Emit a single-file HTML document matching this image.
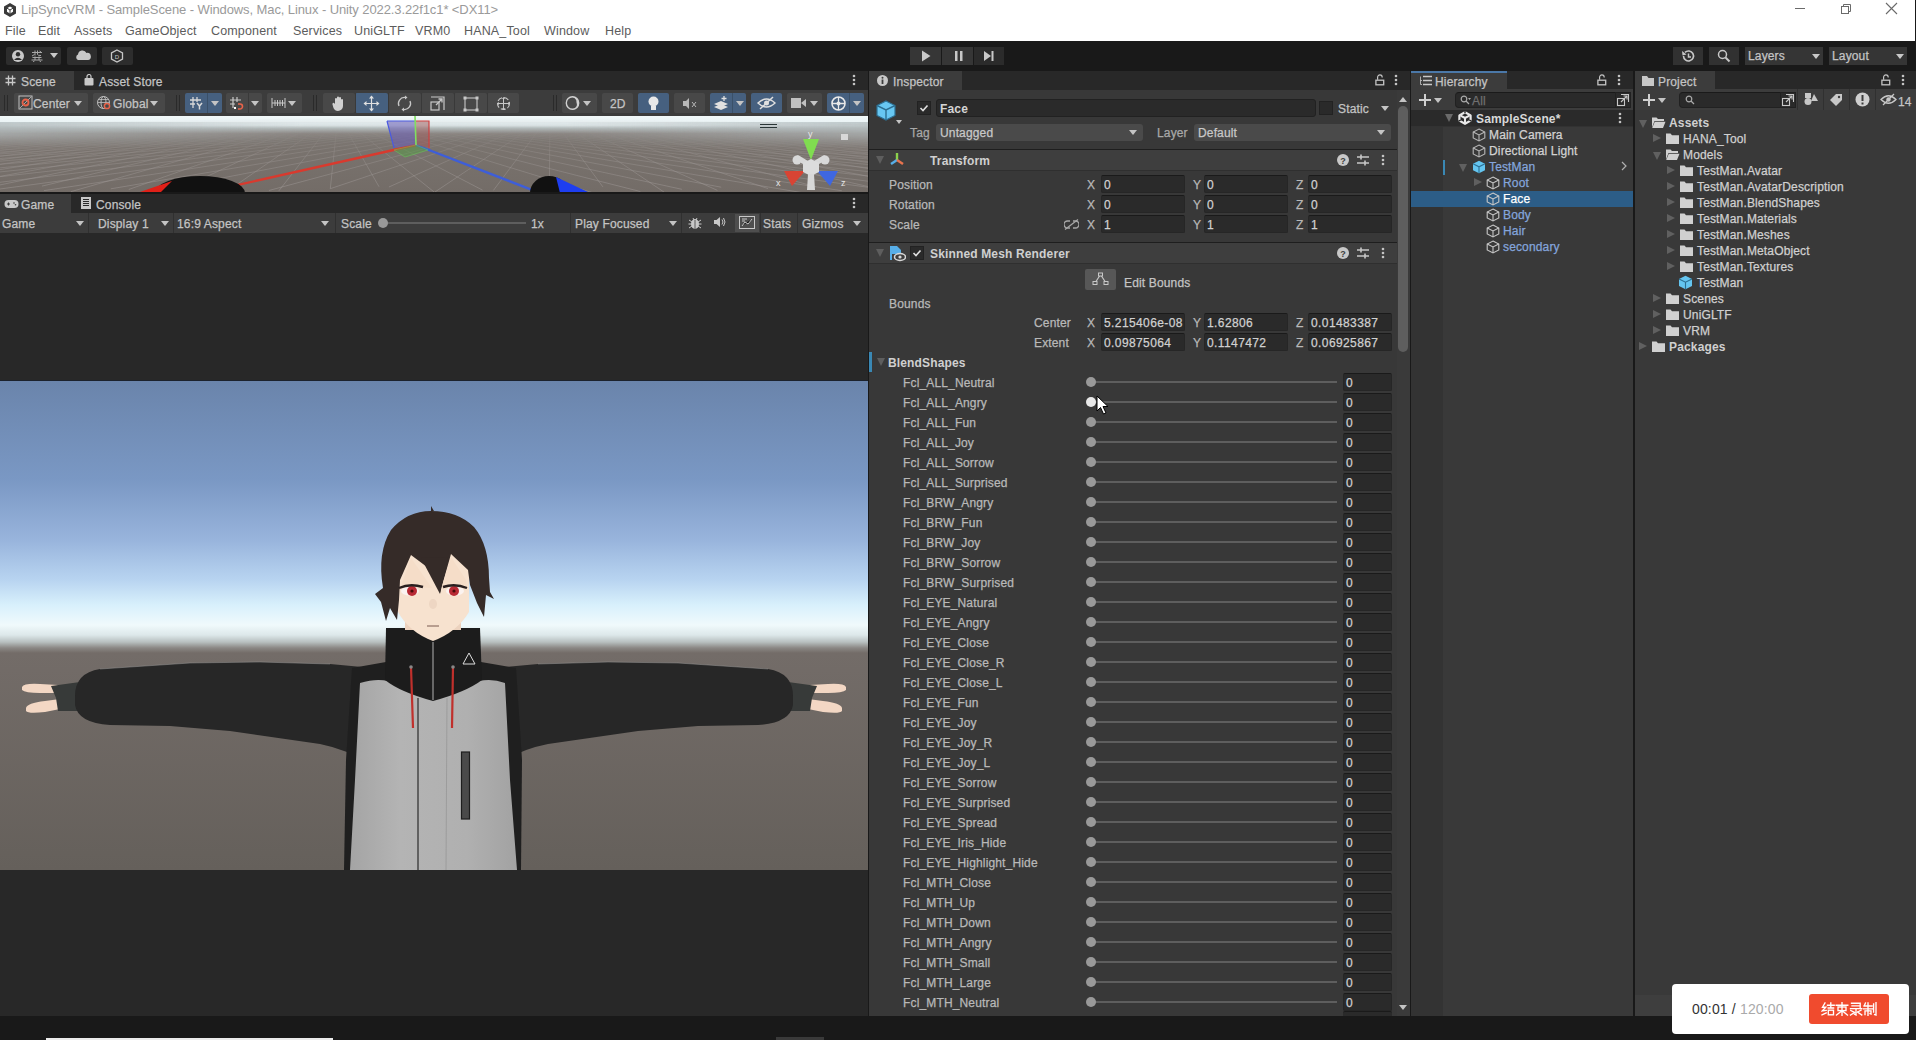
<!DOCTYPE html><html><head><meta charset="utf-8"><style>
html,body{margin:0;padding:0}
body{width:1916px;height:1040px;position:relative;overflow:hidden;background:#191919;font-family:"Liberation Sans",sans-serif;font-size:12px;color:#c4c4c4}
body div, body span.t{position:absolute;box-sizing:border-box}
span.t{white-space:nowrap;line-height:14px;letter-spacing:0.15px;-webkit-text-stroke:0.25px currentColor}
span.t[style*="bold"]{-webkit-text-stroke:0}
</style></head><body>

<div style="left:0px;top:0px;width:1915px;height:41px;background:#ffffff;"></div>
<svg style="position:absolute;left:2px;top:2px;" width="16" height="16" viewBox="0 0 16 16"><path d="M8 1 L14 4.5 V11.5 L8 15 L2 11.5 V4.5 Z" fill="#3a3a3a"/><path d="M8 4.5 L11 6.2 V9.8 L8 11.5 L5 9.8 V6.2 Z" fill="#fff"/><path d="M8 8 L11 6.2 M8 8 L5 6.2 M8 8 V11.5" stroke="#3a3a3a" stroke-width="1"/></svg>
<span class="t" style="left:21px;top:3px;color:#9a9a9a;font-size:13px;font-weight:normal;letter-spacing:-0.1px;-webkit-text-stroke:0">LipSyncVRM - SampleScene - Windows, Mac, Linux - Unity 2022.3.22f1c1* &lt;DX11&gt;</span>
<span class="t" style="left:5px;top:24px;color:#5c5c5c;font-size:12.5px;font-weight:normal;-webkit-text-stroke:0">File</span>
<span class="t" style="left:38px;top:24px;color:#5c5c5c;font-size:12.5px;font-weight:normal;-webkit-text-stroke:0">Edit</span>
<span class="t" style="left:74px;top:24px;color:#5c5c5c;font-size:12.5px;font-weight:normal;-webkit-text-stroke:0">Assets</span>
<span class="t" style="left:125px;top:24px;color:#5c5c5c;font-size:12.5px;font-weight:normal;-webkit-text-stroke:0">GameObject</span>
<span class="t" style="left:211px;top:24px;color:#5c5c5c;font-size:12.5px;font-weight:normal;-webkit-text-stroke:0">Component</span>
<span class="t" style="left:293px;top:24px;color:#5c5c5c;font-size:12.5px;font-weight:normal;-webkit-text-stroke:0">Services</span>
<span class="t" style="left:354px;top:24px;color:#5c5c5c;font-size:12.5px;font-weight:normal;-webkit-text-stroke:0">UniGLTF</span>
<span class="t" style="left:415px;top:24px;color:#5c5c5c;font-size:12.5px;font-weight:normal;-webkit-text-stroke:0">VRM0</span>
<span class="t" style="left:464px;top:24px;color:#5c5c5c;font-size:12.5px;font-weight:normal;-webkit-text-stroke:0">HANA_Tool</span>
<span class="t" style="left:544px;top:24px;color:#5c5c5c;font-size:12.5px;font-weight:normal;-webkit-text-stroke:0">Window</span>
<span class="t" style="left:605px;top:24px;color:#5c5c5c;font-size:12.5px;font-weight:normal;-webkit-text-stroke:0">Help</span>
<div style="left:1795px;top:8px;width:10px;height:1px;background:#6a6a6a;"></div>
<svg style="position:absolute;left:1840px;top:3px;" width="12" height="12" viewBox="0 0 12 12"><rect x="1.5" y="3.5" width="7" height="7" fill="none" stroke="#6a6a6a"/><path d="M3.5 3.5 V1.5 H10.5 V8.5 H8.5" fill="none" stroke="#6a6a6a"/></svg>
<svg style="position:absolute;left:1885px;top:2px;" width="13" height="13" viewBox="0 0 13 13"><path d="M1 1 L12 12 M12 1 L1 12" stroke="#6a6a6a" stroke-width="1.1"/></svg>
<div style="left:0px;top:41px;width:1916px;height:29px;background:#191919;"></div>
<div style="left:6px;top:47px;width:55px;height:18px;background:#2d2d2d;border-radius:2px"></div>
<svg style="position:absolute;left:11px;top:49px;" width="14" height="14" viewBox="0 0 14 14"><circle cx="7" cy="7" r="6" fill="#c8c8c8"/><circle cx="7" cy="5.2" r="2.2" fill="#2d2d2d"/><path d="M3 11 Q7 6.5 11 11 Z" fill="#2d2d2d"/></svg>
<svg style="position:absolute;left:31px;top:50px;" width="12" height="12" viewBox="0 0 12 12"><path d="M1 2.5 H11 M4 0.5 V5.5 M3.5 4.5 L1 6 M6.5 0.5 V4.5 Q6.5 5.5 10 5.5 M8.5 1 L10 2 M1.5 7.5 H10.5 M4 6.5 V10 M8 6.5 V10 M0.5 10 H11.5 M3.5 11 L2 12 M8.5 11 L10 12" fill="none" stroke="#a8a8a8" stroke-width="1"/></svg>
<div style="left:50px;top:53px;width:0;height:0;border-left:4.0px solid transparent;border-right:4.0px solid transparent;border-top:5px solid #c8c8c8"></div>
<div style="left:67px;top:47px;width:30px;height:18px;background:#2d2d2d;border-radius:2px"></div>
<svg style="position:absolute;left:75px;top:50px;" width="16" height="11" viewBox="0 0 16 11"><path d="M3 10 a3 3 0 0 1 0-5.5 a4.5 4.5 0 0 1 8.5-1.5 a3 3 0 0 1 1.5 7 Z" fill="#c8c8c8"/></svg>
<div style="left:102px;top:47px;width:31px;height:18px;background:#2d2d2d;border-radius:2px"></div>
<svg style="position:absolute;left:110px;top:49px;" width="14" height="14" viewBox="0 0 14 14"><path d="M7 1 L12.5 4 V10 L7 13 L1.5 10 V4 Z" fill="none" stroke="#c8c8c8" stroke-width="1.3"/><text x="7" y="9.5" font-size="6" text-anchor="middle" fill="#c8c8c8" font-family="Liberation Sans">D</text></svg>
<div style="left:910px;top:47px;width:31px;height:18px;background:#363636;"></div>
<div style="left:942px;top:47px;width:31px;height:18px;background:#363636;"></div>
<div style="left:974px;top:47px;width:30px;height:18px;background:#2b2b2b;"></div>
<svg style="position:absolute;left:921px;top:50px;" width="10" height="12" viewBox="0 0 10 12"><path d="M1 0.5 L9.5 6 L1 11.5 Z" fill="#c8c8c8"/></svg>
<svg style="position:absolute;left:954px;top:50px;" width="10" height="12" viewBox="0 0 10 12"><rect x="1" y="1" width="2.5" height="10" fill="#c8c8c8"/><rect x="6" y="1" width="2.5" height="10" fill="#c8c8c8"/></svg>
<svg style="position:absolute;left:983px;top:50px;" width="12" height="12" viewBox="0 0 12 12"><path d="M1 1 L8 6 L1 11 Z" fill="#c8c8c8"/><rect x="8.5" y="1" width="2" height="10" fill="#c8c8c8"/></svg>
<div style="left:1673px;top:47px;width:30px;height:18px;background:#313131;"></div>
<svg style="position:absolute;left:1680px;top:49px;" width="16" height="14" viewBox="0 0 16 14"><path d="M3.5 7 a5 5 0 1 0 1.5-3.6" fill="none" stroke="#c8c8c8" stroke-width="1.6"/><path d="M2 2 L2.5 6.5 L6.5 5.5 Z" fill="#c8c8c8"/><path d="M8.5 4.5 V8 H11" fill="none" stroke="#c8c8c8" stroke-width="1.5"/></svg>
<div style="left:1709px;top:47px;width:30px;height:18px;background:#313131;"></div>
<svg style="position:absolute;left:1717px;top:49px;" width="14" height="14" viewBox="0 0 14 14"><circle cx="5.5" cy="5.5" r="4" fill="none" stroke="#c8c8c8" stroke-width="1.5"/><path d="M8.5 8.5 L12.5 12.5" stroke="#c8c8c8" stroke-width="2"/></svg>
<div style="left:1745px;top:47px;width:78px;height:18px;background:#353535;"></div>
<span class="t" style="left:1748px;top:49px;color:#c4c4c4;font-size:12px;font-weight:normal;">Layers</span>
<div style="left:1812px;top:54px;width:0;height:0;border-left:4.0px solid transparent;border-right:4.0px solid transparent;border-top:5px solid #c8c8c8"></div>
<div style="left:1829px;top:47px;width:78px;height:18px;background:#353535;"></div>
<span class="t" style="left:1832px;top:49px;color:#c4c4c4;font-size:12px;font-weight:normal;">Layout</span>
<div style="left:1896px;top:54px;width:0;height:0;border-left:4.0px solid transparent;border-right:4.0px solid transparent;border-top:5px solid #c8c8c8"></div>
<div style="left:0px;top:71px;width:868px;height:19px;background:#282828;"></div>
<div style="left:0px;top:71px;width:74px;height:19px;background:#3c3c3c;"></div>
<svg style="position:absolute;left:5px;top:75px;" width="11" height="11" viewBox="0 0 11 11"><path d="M3.5 0.5 V10.5 M7.5 0.5 V10.5 M0.5 3.5 H10.5 M0.5 7.5 H10.5" stroke="#c8c8c8" stroke-width="1.3"/></svg>
<span class="t" style="left:21px;top:75px;color:#c4c4c4;font-size:12px;font-weight:normal;">Scene</span>
<svg style="position:absolute;left:84px;top:74px;" width="10" height="12" viewBox="0 0 10 12"><path d="M3 4 V2.5 a2 2 0 0 1 4 0 V4" fill="none" stroke="#c8c8c8" stroke-width="1.2"/><rect x="0.5" y="4" width="9" height="7.5" rx="1" fill="#c8c8c8"/></svg>
<span class="t" style="left:99px;top:75px;color:#c4c4c4;font-size:12px;font-weight:normal;">Asset Store</span>
<svg style="position:absolute;left:852px;top:74px;" width="4" height="12" viewBox="0 0 4 12"><circle cx="2" cy="2" r="1.3" fill="#c4c4c4"/><circle cx="2" cy="6" r="1.3" fill="#c4c4c4"/><circle cx="2" cy="10" r="1.3" fill="#c4c4c4"/></svg>
<div style="left:0px;top:90px;width:868px;height:26px;background:#3c3c3c;"></div>
<div style="left:4px;top:95px;width:1px;height:16px;background:#2a2a2a;"></div>
<div style="left:7px;top:95px;width:1px;height:16px;background:#2a2a2a;"></div>
<div style="left:14px;top:93px;width:74px;height:20px;background:#484848;border-radius:2px"></div>
<svg style="position:absolute;left:18px;top:95px;" width="16" height="16" viewBox="0 0 16 16"><rect x="1" y="1" width="13" height="13" fill="none" stroke="#c0c0c0" stroke-width="1"/><path d="M2 13 L13 2" stroke="#c0c0c0" stroke-width="0.8"/><circle cx="7.5" cy="7.5" r="3" fill="none" stroke="#e8634a" stroke-width="1.8"/></svg>
<span class="t" style="left:33px;top:97px;color:#c4c4c4;font-size:12px;font-weight:normal;">Center</span>
<div style="left:74px;top:101px;width:0;height:0;border-left:4.0px solid transparent;border-right:4.0px solid transparent;border-top:5px solid #c4c4c4"></div>
<div style="left:93px;top:93px;width:72px;height:20px;background:#484848;border-radius:2px"></div>
<svg style="position:absolute;left:96px;top:95px;" width="16" height="16" viewBox="0 0 16 16"><circle cx="7.5" cy="7.5" r="6" fill="none" stroke="#c0c0c0" stroke-width="1"/><ellipse cx="7.5" cy="7.5" rx="2.5" ry="6" fill="none" stroke="#c0c0c0" stroke-width="1"/><path d="M1.5 7.5 H13.5 M2.5 4.5 H12.5" stroke="#c0c0c0" stroke-width="0.8"/><circle cx="11" cy="11" r="2.6" fill="#484848" stroke="#e8634a" stroke-width="1.5"/></svg>
<span class="t" style="left:113px;top:97px;color:#c4c4c4;font-size:12px;font-weight:normal;">Global</span>
<div style="left:150px;top:101px;width:0;height:0;border-left:4.0px solid transparent;border-right:4.0px solid transparent;border-top:5px solid #c4c4c4"></div>
<div style="left:176px;top:95px;width:1px;height:16px;background:#2a2a2a;"></div>
<div style="left:179px;top:95px;width:1px;height:16px;background:#2a2a2a;"></div>
<div style="left:185px;top:93px;width:37px;height:20px;background:#46607f;border-radius:2px"></div>
<div style="left:207px;top:93px;width:1px;height:20px;background:#3a5068;"></div>
<svg style="position:absolute;left:189px;top:96px;" width="16" height="14" viewBox="0 0 16 14"><path d="M4 1 V12 M8 1 V6 M1 4 H12 M1 8 H6" stroke="#d8d8d8" stroke-width="1.3"/><path d="M8 7 L10.5 10 L13 7 M10.5 10 V13.5" fill="none" stroke="#d8d8d8" stroke-width="1.5"/></svg>
<div style="left:211px;top:101px;width:0;height:0;border-left:4.0px solid transparent;border-right:4.0px solid transparent;border-top:5px solid #c4c4c4"></div>
<div style="left:226px;top:93px;width:36px;height:20px;background:#484848;border-radius:2px"></div>
<div style="left:248px;top:93px;width:1px;height:20px;background:#3a3a3a;"></div>
<svg style="position:absolute;left:229px;top:96px;" width="17" height="15" viewBox="0 0 17 15"><path d="M4 1 V12 M8 1 V6 M1 4 H12 M1 8 H6" stroke="#c8c8c8" stroke-width="1.2"/><path d="M9 8 H11 a2.5 2.5 0 0 1 0 5 H9" fill="none" stroke="#e8634a" stroke-width="1.6"/><rect x="5" y="11" width="2" height="2" fill="#fff"/></svg>
<div style="left:251px;top:101px;width:0;height:0;border-left:4.0px solid transparent;border-right:4.0px solid transparent;border-top:5px solid #c4c4c4"></div>
<div style="left:267px;top:93px;width:35px;height:20px;background:#484848;border-radius:2px"></div>
<svg style="position:absolute;left:271px;top:96px;" width="16" height="14" viewBox="0 0 16 14"><path d="M1 2 V12 M14 2 V12 M1 7 H14 M4 4 V10 M6.5 4 V10 M9 4 V10 M11.5 4 V10" stroke="#c8c8c8" stroke-width="1"/></svg>
<div style="left:288px;top:101px;width:0;height:0;border-left:4.0px solid transparent;border-right:4.0px solid transparent;border-top:5px solid #c4c4c4"></div>
<div style="left:313px;top:95px;width:1px;height:16px;background:#2a2a2a;"></div>
<div style="left:316px;top:95px;width:1px;height:16px;background:#2a2a2a;"></div>
<div style="left:323px;top:93px;width:32px;height:20px;background:#484848;border-radius:2px"></div>
<div style="left:355px;top:93px;width:33px;height:20px;background:#46607f;border-radius:2px"></div>
<div style="left:388px;top:93px;width:33px;height:20px;background:#484848;border-radius:2px"></div>
<div style="left:421px;top:93px;width:33px;height:20px;background:#484848;border-radius:2px"></div>
<div style="left:454px;top:93px;width:33px;height:20px;background:#484848;border-radius:2px"></div>
<div style="left:487px;top:93px;width:32px;height:20px;background:#484848;border-radius:2px"></div>
<div style="left:355px;top:93px;width:1px;height:20px;background:#393939;"></div>
<div style="left:388px;top:93px;width:1px;height:20px;background:#393939;"></div>
<div style="left:421px;top:93px;width:1px;height:20px;background:#393939;"></div>
<div style="left:454px;top:93px;width:1px;height:20px;background:#393939;"></div>
<div style="left:487px;top:93px;width:1px;height:20px;background:#393939;"></div>
<svg style="position:absolute;left:331px;top:95px;" width="16" height="17" viewBox="0 0 16 17"><path d="M4 9 V4 a1 1 0 0 1 2 0 V8 V2.5 a1 1 0 0 1 2 0 V8 V3 a1 1 0 0 1 2 0 V8.5 V5 a1 1 0 0 1 2 0 V11 a5 5 0 0 1 -5 5 a5 5 0 0 1 -4.5 -3 L1.5 9.5 a1 1 0 0 1 2 -1 Z" fill="#d0d0d0"/></svg>
<svg style="position:absolute;left:363px;top:95px;" width="17" height="17" viewBox="0 0 17 17"><path d="M8.5 1 V16 M1 8.5 H16" stroke="#e0e0e0" stroke-width="1.2"/><path d="M8.5 0.5 L6 3.5 H11 Z M8.5 16.5 L6 13.5 H11 Z M0.5 8.5 L3.5 6 V11 Z M16.5 8.5 L13.5 6 V11 Z" fill="#e0e0e0"/></svg>
<svg style="position:absolute;left:396px;top:95px;" width="17" height="17" viewBox="0 0 17 17"><path d="M3 11 A6 6 0 0 1 9 2.5" fill="none" stroke="#c8c8c8" stroke-width="1.3"/><path d="M14 6 A6 6 0 0 1 8 14.5" fill="none" stroke="#c8c8c8" stroke-width="1.3"/><path d="M9 0.5 L11.5 2.5 L9 4.5 Z M8 12.5 L5.5 14.5 L8 16.5 Z" fill="#c8c8c8"/></svg>
<svg style="position:absolute;left:430px;top:96px;" width="16" height="16" viewBox="0 0 16 16"><rect x="1" y="6" width="8" height="8" fill="none" stroke="#c8c8c8" stroke-width="1.2"/><path d="M1 1 H14 V14" fill="none" stroke="#c8c8c8" stroke-width="1.2"/><path d="M6 9 L12 3 M8.5 3 H12 V6.5" fill="none" stroke="#c8c8c8" stroke-width="1.3"/></svg>
<svg style="position:absolute;left:463px;top:96px;" width="16" height="16" viewBox="0 0 16 16"><rect x="2" y="2" width="12" height="12" fill="none" stroke="#c8c8c8" stroke-width="1.1"/><rect x="0.5" y="0.5" width="3" height="3" fill="#c8c8c8"/><rect x="12.5" y="0.5" width="3" height="3" fill="#c8c8c8"/><rect x="0.5" y="12.5" width="3" height="3" fill="#c8c8c8"/><rect x="12.5" y="12.5" width="3" height="3" fill="#c8c8c8"/></svg>
<svg style="position:absolute;left:495px;top:95px;" width="17" height="17" viewBox="0 0 17 17"><circle cx="8.5" cy="8.5" r="6" fill="none" stroke="#c8c8c8" stroke-width="1.1" stroke-dasharray="5 2"/><path d="M8.5 3 V14 M3 8.5 H14" stroke="#c8c8c8" stroke-width="1"/><path d="M8.5 2 L7 4 H10 Z M8.5 15 L7 13 H10 Z M2 8.5 L4 7 V10 Z M15 8.5 L13 7 V10 Z" fill="#c8c8c8"/></svg>
<div style="left:553px;top:95px;width:1px;height:16px;background:#2a2a2a;"></div>
<div style="left:556px;top:95px;width:1px;height:16px;background:#2a2a2a;"></div>
<div style="left:562px;top:93px;width:35px;height:20px;background:#484848;border-radius:2px"></div>
<svg style="position:absolute;left:565px;top:95px;" width="16" height="16" viewBox="0 0 16 16"><circle cx="7.5" cy="8" r="6.2" fill="none" stroke="#d0d0d0" stroke-width="1.4"/><path d="M6 2 A6.2 6.2 0 0 1 13.7 8 A6.2 6.2 0 0 1 3 12.5 A5 5 0 0 0 11.5 7.5 A5 5 0 0 0 6 2 Z" fill="#d0d0d0"/></svg>
<div style="left:583px;top:101px;width:0;height:0;border-left:4.0px solid transparent;border-right:4.0px solid transparent;border-top:5px solid #c4c4c4"></div>
<div style="left:602px;top:93px;width:31px;height:20px;background:#484848;border-radius:2px"></div>
<span class="t" style="left:610px;top:97px;color:#c4c4c4;font-size:12px;font-weight:normal;">2D</span>
<div style="left:638px;top:93px;width:31px;height:20px;background:#46607f;border-radius:2px"></div>
<svg style="position:absolute;left:646px;top:95px;" width="15" height="17" viewBox="0 0 15 17"><circle cx="7.5" cy="6.5" r="5" fill="#e8e8e8"/><rect x="5" y="11" width="5" height="4" fill="#e8e8e8"/></svg>
<div style="left:674px;top:93px;width:31px;height:20px;background:#484848;border-radius:2px"></div>
<svg style="position:absolute;left:681px;top:96px;" width="18" height="15" viewBox="0 0 18 15"><path d="M2 5 H5 L8 2 V13 L5 10 H2 Z" fill="#b8b8b8"/><path d="M11 6 L15 11 M15 6 L11 11" stroke="#b8b8b8" stroke-width="1"/></svg>
<div style="left:710px;top:93px;width:36px;height:20px;background:#46607f;border-radius:2px"></div>
<div style="left:732px;top:93px;width:1px;height:20px;background:#3a5068;"></div>
<svg style="position:absolute;left:713px;top:95px;" width="17" height="16" viewBox="0 0 17 16"><path d="M1 9 L8 6 L15 9 L8 12 Z" fill="#e0e0e0"/><path d="M1 12 L8 9 L15 12 L8 15 Z" fill="#e0e0e0"/><path d="M11 1 V6 M8.5 3.5 H13.5" stroke="#e0e0e0" stroke-width="1.3"/></svg>
<div style="left:736px;top:101px;width:0;height:0;border-left:4.0px solid transparent;border-right:4.0px solid transparent;border-top:5px solid #c4c4c4"></div>
<div style="left:751px;top:93px;width:31px;height:20px;background:#46607f;border-radius:2px"></div>
<svg style="position:absolute;left:757px;top:96px;" width="19" height="14" viewBox="0 0 19 14"><path d="M1 7 Q9.5 -1 18 7 Q9.5 15 1 7 Z" fill="none" stroke="#e0e0e0" stroke-width="1.5"/><circle cx="9.5" cy="7" r="2.5" fill="#e0e0e0"/><path d="M3 13 L16 1" stroke="#e0e0e0" stroke-width="1.5"/></svg>
<div style="left:787px;top:93px;width:35px;height:20px;background:#484848;border-radius:2px"></div>
<svg style="position:absolute;left:790px;top:97px;" width="18" height="12" viewBox="0 0 18 12"><rect x="1" y="1" width="10" height="10" fill="#c0c0c0"/><path d="M11 6 L16 2 V10 Z" fill="#c0c0c0"/></svg>
<div style="left:810px;top:101px;width:0;height:0;border-left:4.0px solid transparent;border-right:4.0px solid transparent;border-top:5px solid #c4c4c4"></div>
<div style="left:827px;top:93px;width:37px;height:20px;background:#46607f;border-radius:2px"></div>
<div style="left:849px;top:93px;width:1px;height:20px;background:#3a5068;"></div>
<svg style="position:absolute;left:830px;top:95px;" width="17" height="17" viewBox="0 0 17 17"><circle cx="8.5" cy="8.5" r="6.5" fill="none" stroke="#e8e8e8" stroke-width="1.6"/><path d="M2 8.5 H15 M8.5 2 V15" stroke="#e8e8e8" stroke-width="1.3"/><circle cx="8.5" cy="8.5" r="2" fill="#e8e8e8"/></svg>
<div style="left:853px;top:101px;width:0;height:0;border-left:4.0px solid transparent;border-right:4.0px solid transparent;border-top:5px solid #c4c4c4"></div>
<svg style="position:absolute;left:0;top:116px" width="868" height="77" viewBox="0 116 868 77">
<defs><linearGradient id="sky1" x1="0" y1="116" x2="0" y2="193" gradientUnits="userSpaceOnUse">
<stop offset="0" stop-color="#f2f9fa"/><stop offset="0.12" stop-color="#e6f0f2"/><stop offset="0.16" stop-color="#b4bcbc"/><stop offset="0.23" stop-color="#86807c"/><stop offset="0.32" stop-color="#7a746f"/><stop offset="1" stop-color="#736c67"/></linearGradient>
<linearGradient id="fogx" x1="0" y1="0" x2="868" y2="0" gradientUnits="userSpaceOnUse">
<stop offset="0" stop-color="#b4bec0" stop-opacity="0.8"/><stop offset="0.35" stop-color="#b4bec0" stop-opacity="0.1"/><stop offset="0.65" stop-color="#b4bec0" stop-opacity="0.1"/><stop offset="1" stop-color="#b4bec0" stop-opacity="0.8"/></linearGradient>
<linearGradient id="gfade" x1="0" y1="116" x2="0" y2="193" gradientUnits="userSpaceOnUse">
<stop offset="0" stop-color="#fff" stop-opacity="0"/><stop offset="0.2" stop-color="#fff" stop-opacity="0.15"/><stop offset="0.5" stop-color="#fff" stop-opacity="0.7"/><stop offset="1" stop-color="#fff" stop-opacity="1"/></linearGradient>
<linearGradient id="fogyg" x1="0" y1="122" x2="0" y2="148" gradientUnits="userSpaceOnUse"><stop offset="0" stop-color="#fff" stop-opacity="1"/><stop offset="0.5" stop-color="#fff" stop-opacity="0.8"/><stop offset="1" stop-color="#fff" stop-opacity="0"/></linearGradient><mask id="fogy"><rect x="0" y="122" width="868" height="26" fill="url(#fogyg)"/></mask>
<mask id="gmask"><rect x="0" y="116" width="868" height="77" fill="url(#gfade)"/></mask></defs>
<rect x="0" y="116" width="868" height="77" fill="url(#sky1)"/>
<rect x="0" y="122" width="868" height="26" fill="url(#fogx)" mask="url(#fogy)"/>
<g mask="url(#gmask)"><path d="M-47.2 125.1 L24.2 123.3 M-49.9 125.4 L37.7 123.1 M-46.9 125.5 L50.5 122.9 M-49.7 125.8 L62.7 122.7 M-46.6 125.9 L74.4 122.5 M-49.5 126.2 L85.4 122.3 M-46.3 126.3 L96.0 122.1 M-49.2 126.7 L106.1 122.0 M-45.9 126.8 L115.8 121.8 M-48.9 127.1 L125.0 121.7 M-45.5 127.3 L133.9 121.5 M-48.7 127.7 L142.4 121.4 M-45.0 127.8 L150.6 121.3 M-48.3 128.2 L158.4 121.2 M-44.5 128.4 L166.0 121.0 M-48.0 128.9 L173.2 120.9 M-44.0 129.1 L180.2 120.8 M-47.6 129.6 L186.9 120.7 M-43.4 129.8 L193.4 120.6 M-47.2 130.3 L199.7 120.5 M-42.8 130.6 L205.7 120.4 M-46.7 131.2 L211.6 120.3 M-42.1 131.5 L217.2 120.2 M-46.2 132.1 L222.7 120.1 M-41.2 132.4 L228.0 120.1 M-45.6 133.2 L233.1 120.0 M-40.3 133.6 L238.0 119.9 M-45.0 134.4 L242.8 119.8 M-39.3 134.8 L247.5 119.8 M-44.2 135.8 L252.0 119.7 M-49.7 136.9 L256.4 119.6 M-43.4 137.4 L260.7 119.5 M-49.2 138.7 L264.8 119.5 M-42.3 139.3 L268.8 119.4 M-48.6 140.8 L272.7 119.4 M-41.1 141.5 L276.5 119.3 M-48.0 143.3 L280.2 119.2 M-39.7 144.2 L283.8 119.2 M-47.1 146.4 L287.3 119.1 M-37.9 147.4 L290.7 119.1 M-46.1 150.2 L294.1 119.0 M-35.7 151.5 L297.3 119.0 M-44.8 155.0 L300.5 118.9 M-32.9 156.7 L303.6 118.9 M-43.1 161.4 L306.6 118.8 M-29.1 163.7 L309.5 118.8 M-40.8 170.2 L312.4 118.7 M-23.8 173.5 L315.2 118.7 M-37.3 183.1 L317.9 118.6 M-15.8 188.2 L320.6 118.6 M42.0 186.1 L323.2 118.6 M70.8 191.7 L325.7 118.5 M128.8 189.5 L328.2 118.5 M183.6 187.4 L330.6 118.4 M224.2 193.2 L333.0 118.4 M278.8 190.9 L335.4 118.4 M330.3 188.7 L337.7 118.3 M379.0 186.7 L339.9 118.3 M434.5 192.3 L342.1 118.3 M482.5 190.1 L344.2 118.2 M527.7 188.0 L346.3 118.2 M596.2 193.8 L348.4 118.2 M640.3 191.5 L350.4 118.1 M681.9 189.3 L352.4 118.1 M721.2 187.2 L354.3 118.1 M804.2 193.0 L356.2 118.0 M841.8 190.7 L358.1 118.0 M877.2 188.5 L359.9 118.0 M910.7 186.5 L361.7 118.0 M888.7 178.4 L363.5 117.9 M917.4 176.9 L365.2 117.9 M897.3 170.7 L366.9 117.9 M880.9 165.7 L368.6 117.9 M904.1 164.7 L370.2 117.8 M888.8 160.7 L371.8 117.8 M909.6 159.9 L373.4 117.8 M895.2 156.5 L374.9 117.8 M914.1 155.9 L376.4 117.7 M900.6 153.1 L377.9 117.7 M917.9 152.5 L379.4 117.7 M905.2 150.2 L380.9 117.7 M894.0 148.1 L382.3 117.6 M909.1 147.7 L383.7 117.6 M898.4 145.9 L385.1 117.6 M912.5 145.5 L386.4 117.6 M902.3 143.9 L387.7 117.6 M915.4 143.6 L389.0 117.5 M905.7 142.2 L390.3 117.5 M918.1 141.9 L391.6 117.5 M908.8 140.7 L392.8 117.5 M900.3 139.6 L394.1 117.5 M911.5 139.3 L395.3 117.4 M903.4 138.3 L396.5 117.4 M914.0 138.1 L397.6 117.4 M906.1 137.2 L398.8 117.4 M916.2 137.0 L399.9 117.4 M908.6 136.2 L401.1 117.3 M918.2 136.0 L402.2 117.3 M910.9 135.3 L403.2 117.3 M904.1 134.5 L404.3 117.3 M912.9 134.4 L405.4 117.3 M906.3 133.7 L406.4 117.3 M914.9 133.6 L407.4 117.2 M908.5 133.0 L408.5 117.2 M916.6 132.9 L409.4 117.2 M910.4 132.3 L410.4 117.2 M918.2 132.2 L411.4 117.2 M912.2 131.7 L412.4 117.2 M919.8 131.6 L413.3 117.1 M913.9 131.1 L414.2 117.1 M908.4 130.7 L415.1 117.1 M915.5 130.6 L416.1 117.1 M910.1 130.2 L416.9 117.1 M916.9 130.1 L417.8 117.1 M911.7 129.7 L418.7 117.1 M918.3 129.6 L419.6 117.1 M913.2 129.2 L420.4 117.0 M919.6 129.1 L421.2 117.0 M914.6 128.8 L422.1 117.0 M909.8 128.5 L423.1 117.0 M915.9 128.4 L424.4 117.0 M918.8 125.3 L914.0 125.2 M917.1 125.5 L894.1 124.9 M915.5 125.7 L875.5 124.5 M918.9 126.0 L858.1 124.2 M917.1 126.2 L841.8 123.9 M915.4 126.4 L826.5 123.7 M919.0 126.8 L812.1 123.4 M917.1 127.1 L798.6 123.2 M915.2 127.3 L785.8 122.9 M919.1 127.7 L773.6 122.7 M917.2 128.0 L762.2 122.5 M915.1 128.3 L751.3 122.3 M919.3 128.8 L740.9 122.1 M917.2 129.1 L731.1 122.0 M914.9 129.5 L721.7 121.8 M919.5 130.1 L712.8 121.6 M917.2 130.5 L704.2 121.5 M914.7 130.8 L696.1 121.3 M919.8 131.6 L688.3 121.2 M917.2 132.1 L680.8 121.1 M914.4 132.5 L673.7 121.0 M911.5 133.0 L666.8 120.8 M917.2 134.0 L660.2 120.7 M914.1 134.6 L653.9 120.6 M910.9 135.3 L647.8 120.5 M917.2 136.5 L642.0 120.4 M913.7 137.3 L636.3 120.3 M910.0 138.1 L630.9 120.2 M917.2 139.7 L625.7 120.1 M913.2 140.7 L620.6 120.0 M908.8 141.9 L615.7 119.9 M917.2 144.1 L611.0 119.8 M912.5 145.5 L606.5 119.8 M907.2 147.1 L602.1 119.7 M917.3 150.3 L597.8 119.6 M911.4 152.5 L593.7 119.5 M904.8 154.8 L589.7 119.5 M917.3 160.0 L585.8 119.4 M909.7 163.5 L582.0 119.3 M900.9 167.5 L578.4 119.3 M917.4 176.9 L574.9 119.2 M906.7 183.7 L571.4 119.1 M893.4 192.2 L568.1 119.1 M816.4 186.9 L564.8 119.0 M768.1 188.6 L561.7 119.0 M717.4 190.4 L558.6 118.9 M664.2 192.2 L555.6 118.9 M602.9 186.9 L552.7 118.8 M549.4 188.7 L549.9 118.8 M493.4 190.4 L547.2 118.7 M434.5 192.3 L544.5 118.7 M388.9 187.0 L541.9 118.6 M330.3 188.7 L539.3 118.6 M268.9 190.5 L536.8 118.5 M204.4 192.4 L534.4 118.5 M174.6 187.1 L532.0 118.4 M110.8 188.8 L529.7 118.4 M44.0 190.6 L527.5 118.4 M-26.2 192.5 L525.3 118.3 M-40.2 187.2 L523.1 118.3 M-4.6 177.2 L521.0 118.2 M-17.2 173.7 L518.9 118.2 M-28.4 170.6 L516.9 118.2 M-38.5 167.8 L515.0 118.1 M-47.6 165.2 L513.0 118.1 M-21.0 160.2 L511.2 118.1 M-29.6 158.3 L509.3 118.0 M-37.5 156.6 L507.5 118.0 M-44.8 155.0 L505.7 118.0 M-23.4 151.7 L504.0 117.9 M-30.4 150.5 L502.3 117.9 M-36.9 149.3 L500.7 117.9 M-43.0 148.2 L499.0 117.9 M-48.7 147.2 L497.4 117.8 M-30.9 145.1 L495.9 117.8 M-36.4 144.2 L494.3 117.8 M-41.7 143.4 L492.8 117.7 M-46.6 142.7 L491.4 117.7 M-31.3 141.1 L489.9 117.7 M-36.1 140.4 L488.5 117.7 M-40.7 139.8 L487.1 117.6 M-45.0 139.3 L485.7 117.6 M-49.2 138.7 L484.4 117.6 M-35.8 137.5 L483.1 117.6 M-39.9 137.0 L481.8 117.5 M-43.8 136.6 L480.5 117.5 M-47.5 136.2 L479.2 117.5 M-35.6 135.2 L478.0 117.5 M-39.3 134.8 L476.8 117.5 M-42.8 134.5 L475.6 117.4 M-46.2 134.1 L474.4 117.4 M-49.5 133.8 L473.3 117.4 M-38.8 133.0 L472.2 117.4 M-42.0 132.7 L471.1 117.4 M-45.1 132.4 L470.0 117.3 M-48.1 132.1 L468.9 117.3 M-38.4 131.5 L467.8 117.3 M-41.3 131.2 L466.8 117.3 M-44.2 131.0 L465.8 117.3 M-47.0 130.8 L464.8 117.2 M-49.7 130.5 L463.8 117.2 M-40.8 130.0 L462.8 117.2 M-43.4 129.8 L461.8 117.2 M-46.0 129.6 L460.9 117.2 M-48.5 129.4 L460.0 117.2 M-40.3 128.9 L459.1 117.1 M-42.8 128.8 L458.1 117.1 M-45.2 128.6 L457.3 117.1 M-47.5 128.4 L456.4 117.1 M-49.8 128.2 L455.5 117.1 M-42.2 127.9 L454.7 117.1 M-44.4 127.7 L453.8 117.1 M-46.6 127.5 L453.0 117.0 M-48.8 127.4 L452.2 117.0 M-41.7 127.1 L451.4 117.0" stroke="#a29c98" stroke-width="0.9" fill="none" opacity="0.55"/></g>
<path d="M416 145 L202 193" stroke="#d83a2e" stroke-width="2.4"/>
<path d="M416 145 L540 193" stroke="#3e5ed8" stroke-width="2.4"/>
<path d="M387 121 L416 121 L416 145 L394 148 Z" fill="#6a5cb8" opacity="0.55"/>
<path d="M387 121 L416 121 M387 121 L394 148" stroke="#4a5ae0" stroke-width="1.2" fill="none"/>
<path d="M416 121 L429 121 L429 148 L416 145 Z" fill="#a05a5a" opacity="0.5"/>
<path d="M416 121 L429 121 L429 148" stroke="#d04040" stroke-width="1.2" fill="none"/>
<path d="M394 150 L405 157 L428 150 L416 145 Z" fill="#5a9a4a" opacity="0.55" stroke="#60d050" stroke-width="1"/>
<path d="M415 116 L416 145" stroke="#80e060" stroke-width="1.6"/>
<ellipse cx="200" cy="193" rx="45" ry="17" fill="#111"/>
<path d="M137 193 L172 181 L160 193 Z" fill="#e02018"/>
<ellipse cx="549" cy="193" rx="19" ry="17" fill="#111"/>
<path d="M556 177 L590 193 L560 193 Z" fill="#1e3ef0"/>
<path d="M760 124.5 H777 M760 127.5 H777" stroke="#2a3636" stroke-width="1.1"/>
<rect x="841" y="134" width="7" height="6" fill="#d8d8d8"/>
<g transform="translate(811,166)">
<path d="M0 -6 L-8 -27 L8 -27 Z" fill="#80dc50"/>
<path d="M-6 5 L-27 5 L-19 20 Z" fill="#d84434"/>
<path d="M6 5 L27 5 L19 20 Z" fill="#3f67e0"/>
<path d="M-3 -2 L-13 -8 M3 -2 L13 -8" stroke="#d8d8d8" stroke-width="5" stroke-linecap="round"/>
<circle cx="-14" cy="-6" r="4.5" fill="#d8d8d8"/><circle cx="14" cy="-6" r="4.5" fill="#d8d8d8"/>
<path d="M-8 -3 L0 -7 L8 -3 L8 6 L0 10 L-8 6 Z" fill="#dcdcdc"/>
<path d="M-3 8 L3 8 L4 24 L-4 24 Z" fill="#d8d8d8"/>
</g>
<text x="808" y="137" font-size="9" fill="#e8e8e8" font-family="Liberation Sans">y</text>
<text x="776" y="186" font-size="9" fill="#e8e8e8" font-family="Liberation Sans">x</text>
<text x="841" y="186" font-size="9" fill="#e8e8e8" font-family="Liberation Sans">z</text>
</svg>
<div style="left:0px;top:192px;width:868px;height:2px;background:#191919;"></div>
<div style="left:0px;top:194px;width:868px;height:19px;background:#282828;"></div>
<div style="left:0px;top:194px;width:71px;height:19px;background:#3c3c3c;"></div>
<svg style="position:absolute;left:4px;top:199px;" width="15" height="10" viewBox="0 0 15 10"><rect x="0.5" y="1" width="14" height="8" rx="4" fill="#c8c8c8"/><path d="M3 5 H6 M4.5 3.5 V6.5" stroke="#3c3c3c" stroke-width="1"/><circle cx="10" cy="4" r="0.8" fill="#3c3c3c"/><circle cx="11.5" cy="5.8" r="0.8" fill="#3c3c3c"/></svg>
<span class="t" style="left:21px;top:198px;color:#c4c4c4;font-size:12px;font-weight:normal;">Game</span>
<svg style="position:absolute;left:81px;top:197px;" width="10" height="12" viewBox="0 0 10 12"><rect x="0" y="0" width="10" height="12" fill="#c8c8c8"/><rect x="2" y="2" width="6" height="1" fill="#282828"/><rect x="2" y="4" width="6" height="1" fill="#282828"/><rect x="2" y="6" width="6" height="1" fill="#282828"/><rect x="2" y="8" width="6" height="1" fill="#282828"/></svg>
<span class="t" style="left:96px;top:198px;color:#c4c4c4;font-size:12px;font-weight:normal;">Console</span>
<svg style="position:absolute;left:852px;top:197px;" width="4" height="12" viewBox="0 0 4 12"><circle cx="2" cy="2" r="1.3" fill="#c4c4c4"/><circle cx="2" cy="6" r="1.3" fill="#c4c4c4"/><circle cx="2" cy="10" r="1.3" fill="#c4c4c4"/></svg>
<div style="left:0px;top:213px;width:868px;height:20px;background:#3c3c3c;"></div>
<div style="left:88px;top:213px;width:1px;height:20px;background:#303030;"></div>
<div style="left:173px;top:213px;width:1px;height:20px;background:#303030;"></div>
<div style="left:335px;top:213px;width:1px;height:20px;background:#303030;"></div>
<div style="left:570px;top:213px;width:1px;height:20px;background:#303030;"></div>
<div style="left:681px;top:213px;width:1px;height:20px;background:#303030;"></div>
<div style="left:760px;top:213px;width:1px;height:20px;background:#303030;"></div>
<div style="left:797px;top:213px;width:1px;height:20px;background:#303030;"></div>
<span class="t" style="left:2px;top:217px;color:#c4c4c4;font-size:12px;font-weight:normal;">Game</span>
<div style="left:76px;top:221px;width:0;height:0;border-left:4.0px solid transparent;border-right:4.0px solid transparent;border-top:5px solid #c4c4c4"></div>
<span class="t" style="left:98px;top:217px;color:#c4c4c4;font-size:12px;font-weight:normal;">Display 1</span>
<div style="left:161px;top:221px;width:0;height:0;border-left:4.0px solid transparent;border-right:4.0px solid transparent;border-top:5px solid #c4c4c4"></div>
<span class="t" style="left:177px;top:217px;color:#c4c4c4;font-size:12px;font-weight:normal;">16:9 Aspect</span>
<div style="left:321px;top:221px;width:0;height:0;border-left:4.0px solid transparent;border-right:4.0px solid transparent;border-top:5px solid #c4c4c4"></div>
<span class="t" style="left:341px;top:217px;color:#c4c4c4;font-size:12px;font-weight:normal;">Scale</span>
<div style="left:384px;top:222px;width:142px;height:2px;background:#5e5e5e;"></div>
<svg style="position:absolute;left:378px;top:218px;" width="10" height="10" viewBox="0 0 10 10"><circle cx="5" cy="5" r="5" fill="#999"/></svg>
<span class="t" style="left:531px;top:217px;color:#c4c4c4;font-size:12px;font-weight:normal;">1x</span>
<span class="t" style="left:575px;top:217px;color:#c4c4c4;font-size:12px;font-weight:normal;">Play Focused</span>
<div style="left:669px;top:221px;width:0;height:0;border-left:4.0px solid transparent;border-right:4.0px solid transparent;border-top:5px solid #c4c4c4"></div>
<svg style="position:absolute;left:687px;top:215px;" width="16" height="16" viewBox="0 0 16 16"><ellipse cx="8" cy="9" rx="4" ry="5" fill="#c8c8c8"/><path d="M2 5 L5 7 M14 5 L11 7 M1.5 9 H4 M14.5 9 H12 M2 13 L5 11 M14 13 L11 11 M6 3 L7 5 M10 3 L9 5" stroke="#c8c8c8" stroke-width="1"/><path d="M8 5 V14" stroke="#3c3c3c" stroke-width="0.8"/></svg>
<svg style="position:absolute;left:713px;top:216px;" width="14" height="12" viewBox="0 0 14 12"><path d="M1 4 H3.5 L7 1 V11 L3.5 8 H1 Z" fill="#c8c8c8"/><path d="M9 3.5 Q11 6 9 8.5 M10.5 2 Q13.5 6 10.5 10" fill="none" stroke="#c8c8c8" stroke-width="1"/></svg>
<div style="left:735px;top:214px;width:24px;height:18px;background:#4e4e4e;"></div>
<svg style="position:absolute;left:739px;top:216px;" width="16" height="13" viewBox="0 0 16 13"><rect x="0.5" y="0.5" width="15" height="12" fill="none" stroke="#c8c8c8"/><path d="M3 10 L6 6 L9 8 L13 3 M3 3 H8 M3 5 H6" stroke="#c8c8c8" stroke-width="1"/></svg>
<span class="t" style="left:763px;top:217px;color:#c4c4c4;font-size:12px;font-weight:normal;">Stats</span>
<span class="t" style="left:802px;top:217px;color:#c4c4c4;font-size:12px;font-weight:normal;">Gizmos</span>
<div style="left:853px;top:221px;width:0;height:0;border-left:4.0px solid transparent;border-right:4.0px solid transparent;border-top:5px solid #c4c4c4"></div>
<div style="left:0px;top:233px;width:868px;height:783px;background:#282828;"></div>
<svg style="position:absolute;left:0;top:380px" width="868" height="490" viewBox="0 0 868 490">
<defs>
<linearGradient id="gsky" x1="0" y1="0" x2="0" y2="490" gradientUnits="userSpaceOnUse">
<stop offset="0.0000" stop-color="#6a84ab"/><stop offset="0.2041" stop-color="#7a98c4"/><stop offset="0.3265" stop-color="#98b4dc"/><stop offset="0.4082" stop-color="#b8d4f0"/><stop offset="0.4592" stop-color="#d8f0fc"/><stop offset="0.5000" stop-color="#f0fafc"/><stop offset="0.5204" stop-color="#dde8ea"/><stop offset="0.5347" stop-color="#b8c0c0"/><stop offset="0.5469" stop-color="#8a8784"/><stop offset="0.5571" stop-color="#736c68"/><stop offset="1.0000" stop-color="#65605b"/>
</linearGradient>
<linearGradient id="gfront" x1="0" y1="0" x2="1" y2="0">
<stop offset="0" stop-color="#a4a4a4"/><stop offset="0.3" stop-color="#b4b4b4"/><stop offset="0.7" stop-color="#b0b0b0"/><stop offset="1" stop-color="#a2a2a2"/></linearGradient>
</defs>
<rect width="868" height="490" fill="url(#gsky)"/>
<rect width="868" height="1" fill="#1c222c"/>
<!-- hands left -->
<path d="M22 307 Q24 303 40 304 L58 305 L56 313 L40 313 Q25 313 22 310 Z" fill="#f3d7c4"/>
<path d="M26 328 Q27 323 45 321 L60 319 L60 329 L45 332 Q28 334 26 331 Z" fill="#f3d7c4"/>
<path d="M51 306 L80 302 L80 331 L58 331 L56 318 Z" fill="#373a39"/>
<!-- hands right -->
<path d="M846 307 Q844 303 828 304 L810 305 L812 313 L828 313 Q843 313 846 310 Z" fill="#f3d7c4"/>
<path d="M842 328 Q841 323 823 321 L808 319 L808 329 L823 332 Q840 334 842 331 Z" fill="#f3d7c4"/>
<path d="M817 306 L788 302 L788 331 L810 331 L812 318 Z" fill="#373a39"/>
<!-- arms -->
<defs><clipPath id="armLc"><path d="M75 316 Q75 293 100 289 L190 283 L260 282 L330 284 L362 287 L374 300 L370 385 Q350 370 320 364 L230 351 L170 346 L110 345 Q78 343 75 325 Z"/></clipPath><clipPath id="armRc"><path d="M793 316 Q793 293 768 289 L678 283 L608 282 L538 284 L506 287 L494 300 L498 385 Q518 370 548 364 L638 351 L698 346 L758 345 Q790 343 793 325 Z"/></clipPath><filter id="blur2" x="-20%" y="-20%" width="140%" height="140%"><feGaussianBlur stdDeviation="2.2"/></filter></defs>
<path d="M75 316 Q75 293 100 289 L190 283 L260 282 L330 284 L362 287 L374 300 L370 385 Q350 370 320 364 L230 351 L170 346 L110 345 Q78 343 75 325 Z" fill="#272727"/>
<path d="M793 316 Q793 293 768 289 L678 283 L608 282 L538 284 L506 287 L494 300 L498 385 Q518 370 548 364 L638 351 L698 346 L758 345 Q790 343 793 325 Z" fill="#272727"/>
<path d="M100 289 L190 283 L260 282 L330 284" stroke="#9a9a9a" stroke-width="0.8" fill="none" opacity="0.6"/>
<path d="M768 289 L678 283 L608 282 L538 284" stroke="#9a9a9a" stroke-width="0.8" fill="none" opacity="0.6"/>
<!-- torso black -->
<path d="M352 288 L386 282 L481 282 L516 288 L522 380 L521 490 L344 490 L346 380 Z" fill="#1f1f1f"/>
<!-- grey front -->
<path d="M360 303 Q376 298 388 301 L410 312 L433 320 L456 312 L479 301 Q492 298 505 303 L510 400 L517 490 L350 490 L355 400 Z" fill="url(#gfront)"/>
<path d="M418 318 L418 490" stroke="#2a2a2a" stroke-width="1.2"/>
<path d="M447 318 L446 490" stroke="#9c9c9c" stroke-width="1"/>
<rect x="461.5" y="372" width="8" height="67" fill="#4a4a4a" stroke="#1e1e1e" stroke-width="1.2"/>
<!-- collar -->
<path d="M386 248 L480 248 L482 300 Q466 312 433 321 Q400 312 385 300 Z" fill="#1c1c1c"/>
<path d="M433 262 V320" stroke="#9a9a9a" stroke-width="1.2"/>
<path d="M411 287 L413 348 M453 287 L452 348" stroke="#c0302c" stroke-width="2.2"/>
<circle cx="411" cy="287" r="1.8" fill="#888"/><circle cx="453" cy="287" r="1.8" fill="#888"/>
<path d="M463 284 L469 273 L475 284 Z" fill="none" stroke="#ddd" stroke-width="1"/>
<!-- face -->
<path d="M405 225 L461 225 L461 250 L405 250 Z" fill="#ecd2be"/>
<path d="M398 165 L469 165 L469 232 Q457 252 433 261 Q409 252 398 232 Z" fill="#f7e2cf"/>

<!-- hair -->
<path d="M431 131 Q458 131 474 147 Q489 165 489 198 L490 212 L494 219 L486 215 L484 237 L477 223 L470 205 L468 190 L451 174 L440 213 L431 190 L411 175 L400 200 L399 220 L397 240 L390 228 L386 241 L381 222 L375 214 L383 208 Q377 172 391 150 Q407 131 431 131 Z" fill="#352b28"/>
<path d="M431 131 L431 126 L434 131 Z" fill="#352b28"/>
<!-- forehead openings -->
<path d="M411 178 L401 206 L432 208 Z" fill="#f5ddc8"/>
<path d="M451 177 L441 209 L467 207 L466 200 Z" fill="#f5ddc8"/>
<path d="M421 178 L448 177 L440 214 Z" fill="#352b28"/>
<!-- eyes -->
<ellipse cx="410" cy="211" rx="9" ry="4.5" fill="#fbf3f0"/><circle cx="412" cy="211" r="5" fill="#b82a34"/><circle cx="412" cy="211" r="1.6" fill="#4a0a0a"/>
<ellipse cx="455" cy="211" rx="9" ry="4.5" fill="#fbf3f0"/><circle cx="454" cy="211" r="5" fill="#b82a34"/><circle cx="454" cy="211" r="1.6" fill="#4a0a0a"/>
<path d="M399 208 Q410 203 423 207 M443 207 Q455 203 467 208" stroke="#2a2020" stroke-width="2.4" fill="none"/>
<ellipse cx="433" cy="224" rx="4" ry="5" fill="#dcc0ac" opacity="0.35"/>
<path d="M427 246 H439" stroke="#7a5a50" stroke-width="1"/>
</svg>
<div style="left:868px;top:70px;width:1px;height:946px;background:#191919;"></div>
<div style="left:869px;top:71px;width:541px;height:19px;background:#282828;"></div>
<div style="left:869px;top:71px;width:93px;height:19px;background:#3c3c3c;"></div>
<svg style="position:absolute;left:877px;top:75px;" width="11" height="11" viewBox="0 0 11 11"><circle cx="5.5" cy="5.5" r="5.5" fill="#c8c8c8"/><rect x="4.6" y="4.5" width="1.8" height="4.5" fill="#3c3c3c"/><circle cx="5.5" cy="2.8" r="1" fill="#3c3c3c"/></svg>
<span class="t" style="left:893px;top:75px;color:#c4c4c4;font-size:12px;font-weight:normal;">Inspector</span>
<svg style="position:absolute;left:1375px;top:74px;" width="11" height="12" viewBox="0 0 11 12"><path d="M2.6 5.8 V3.2 a2.3 2.3 0 0 1 4.6 0 V3.6" fill="none" stroke="#c4c4c4" stroke-width="1.2"/><rect x="0.9" y="6.2" width="7.8" height="4.6" fill="none" stroke="#c4c4c4" stroke-width="1.3"/></svg>
<svg style="position:absolute;left:1394px;top:74px;" width="4" height="12" viewBox="0 0 4 12"><circle cx="2" cy="2" r="1.3" fill="#c4c4c4"/><circle cx="2" cy="6" r="1.3" fill="#c4c4c4"/><circle cx="2" cy="10" r="1.3" fill="#c4c4c4"/></svg>
<div style="left:869px;top:90px;width:541px;height:926px;background:#383838;"></div>
<svg style="position:absolute;left:876px;top:100px;" width="22" height="22" viewBox="0 0 22 22"><path d="M10 1 L19 5.5 V15.5 L10 20 L1 15.5 V5.5 Z" fill="#67c7f2"/><path d="M1 5.5 L10 10 L19 5.5 M10 10 V20" fill="none" stroke="#2d6f92" stroke-width="1.4"/><path d="M10 1 L19 5.5 V15.5 L10 20 L1 15.5 V5.5 Z" fill="none" stroke="#2d6f92" stroke-width="1.2"/></svg>
<div style="left:896px;top:120px;width:0;height:0;border-left:3.5px solid transparent;border-right:3.5px solid transparent;border-top:4px solid #c4c4c4"></div>
<div style="left:917px;top:101px;width:14px;height:14px;background:#2a2a2a;border:1px solid #222"></div>
<svg style="position:absolute;left:918px;top:102px;" width="12" height="12" viewBox="0 0 12 12"><path d="M2.5 6 L5 8.5 L9.5 3.5" fill="none" stroke="#e0e0e0" stroke-width="1.6"/></svg>
<div style="left:936px;top:99px;width:380px;height:18px;background:#2a2a2a;border:1px solid #212121;border-radius:3px"></div>
<span class="t" style="left:940px;top:102px;color:#d4d4d4;font-size:12px;font-weight:bold;">Face</span>
<div style="left:1319px;top:101px;width:14px;height:14px;background:#2a2a2a;border:1px solid #222"></div>
<span class="t" style="left:1338px;top:102px;color:#c4c4c4;font-size:12px;font-weight:normal;">Static</span>
<div style="left:1381px;top:106px;width:0;height:0;border-left:4.5px solid transparent;border-right:4.5px solid transparent;border-top:5px solid #c4c4c4"></div>
<span class="t" style="left:910px;top:126px;color:#a8a8a8;font-size:12px;font-weight:normal;">Tag</span>
<div style="left:936px;top:124px;width:207px;height:17px;background:#4a4a4a;border-radius:3px"></div>
<span class="t" style="left:940px;top:126px;color:#c8c8c8;font-size:12px;font-weight:normal;">Untagged</span>
<div style="left:1129px;top:130px;width:0;height:0;border-left:4.0px solid transparent;border-right:4.0px solid transparent;border-top:5px solid #c4c4c4"></div>
<span class="t" style="left:1157px;top:126px;color:#a8a8a8;font-size:12px;font-weight:normal;">Layer</span>
<div style="left:1194px;top:124px;width:197px;height:17px;background:#4a4a4a;border-radius:3px"></div>
<span class="t" style="left:1198px;top:126px;color:#c8c8c8;font-size:12px;font-weight:normal;">Default</span>
<div style="left:1377px;top:130px;width:0;height:0;border-left:4.0px solid transparent;border-right:4.0px solid transparent;border-top:5px solid #c4c4c4"></div>
<div style="left:1397px;top:90px;width:13px;height:926px;background:#3a3a3a;"></div>
<div style="left:1399px;top:97px;width:0;height:0;border-left:4.5px solid transparent;border-right:4.5px solid transparent;border-bottom:5px solid #c4c4c4"></div>
<div style="left:1398px;top:106px;width:10px;height:246px;background:#5e5e5e;border-radius:5px"></div>
<div style="left:1399px;top:1005px;width:0;height:0;border-left:4.5px solid transparent;border-right:4.5px solid transparent;border-top:5px solid #c4c4c4"></div>
<div style="left:869px;top:149px;width:528px;height:1px;background:#1e1e1e;"></div>
<div style="left:869px;top:150px;width:528px;height:20px;background:#3e3e3e;"></div>
<div style="left:869px;top:170px;width:528px;height:1px;background:#2f2f2f;"></div>
<div style="left:876px;top:156px;width:0;height:0;border-left:4.5px solid transparent;border-right:4.5px solid transparent;border-top:8px solid #5e5e5e"></div>
<svg style="position:absolute;left:889px;top:152px" width="16" height="16" viewBox="0 0 16 16"><path d="M8 1 V8" stroke="#8cd04c" stroke-width="2.4"/><path d="M8 8 L2 12" stroke="#57aee8" stroke-width="2.4"/><path d="M8 8 L14 12" stroke="#e8734e" stroke-width="2.4"/></svg>
<span class="t" style="left:930px;top:154px;color:#d0d0d0;font-size:12px;font-weight:bold;">Transform</span>
<svg style="position:absolute;left:1336px;top:153px;" width="14" height="14" viewBox="0 0 14 14"><circle cx="7" cy="7" r="6" fill="#c8c8c8"/><text x="7" y="10.5" font-size="9" font-weight="bold" text-anchor="middle" fill="#3e3e3e" font-family="Liberation Sans">?</text></svg>
<svg style="position:absolute;left:1356px;top:153px;" width="14" height="14" viewBox="0 0 14 14"><path d="M1 4 H13 M1 10 H13" stroke="#c8c8c8" stroke-width="1.3"/><path d="M5 1.5 V6.5 M9 7.5 V12.5" stroke="#c8c8c8" stroke-width="1.6"/></svg>
<svg style="position:absolute;left:1381px;top:154px;" width="4" height="12" viewBox="0 0 4 12"><circle cx="2" cy="2" r="1.3" fill="#c4c4c4"/><circle cx="2" cy="6" r="1.3" fill="#c4c4c4"/><circle cx="2" cy="10" r="1.3" fill="#c4c4c4"/></svg>
<span class="t" style="left:889px;top:178px;color:#b8b8b8;font-size:12px;font-weight:normal;">Position</span>
<span class="t" style="left:1087px;top:178px;color:#b8b8b8;font-size:12px;font-weight:normal;">X</span>
<div style="left:1101px;top:175px;width:84px;height:18px;background:#2a2a2a;border:1px solid #262626;border-top-color:#1a1a1a;border-radius:2px;overflow:hidden"></div>
<span class="t" style="left:1104px;top:178px;width:80px;overflow:hidden;color:#d0d0d0">0</span>
<span class="t" style="left:1193px;top:178px;color:#b8b8b8;font-size:12px;font-weight:normal;">Y</span>
<div style="left:1204px;top:175px;width:84px;height:18px;background:#2a2a2a;border:1px solid #262626;border-top-color:#1a1a1a;border-radius:2px;overflow:hidden"></div>
<span class="t" style="left:1207px;top:178px;width:80px;overflow:hidden;color:#d0d0d0">0</span>
<span class="t" style="left:1296px;top:178px;color:#b8b8b8;font-size:12px;font-weight:normal;">Z</span>
<div style="left:1308px;top:175px;width:84px;height:18px;background:#2a2a2a;border:1px solid #262626;border-top-color:#1a1a1a;border-radius:2px;overflow:hidden"></div>
<span class="t" style="left:1311px;top:178px;width:80px;overflow:hidden;color:#d0d0d0">0</span>
<span class="t" style="left:889px;top:198px;color:#b8b8b8;font-size:12px;font-weight:normal;">Rotation</span>
<span class="t" style="left:1087px;top:198px;color:#b8b8b8;font-size:12px;font-weight:normal;">X</span>
<div style="left:1101px;top:195px;width:84px;height:18px;background:#2a2a2a;border:1px solid #262626;border-top-color:#1a1a1a;border-radius:2px;overflow:hidden"></div>
<span class="t" style="left:1104px;top:198px;width:80px;overflow:hidden;color:#d0d0d0">0</span>
<span class="t" style="left:1193px;top:198px;color:#b8b8b8;font-size:12px;font-weight:normal;">Y</span>
<div style="left:1204px;top:195px;width:84px;height:18px;background:#2a2a2a;border:1px solid #262626;border-top-color:#1a1a1a;border-radius:2px;overflow:hidden"></div>
<span class="t" style="left:1207px;top:198px;width:80px;overflow:hidden;color:#d0d0d0">0</span>
<span class="t" style="left:1296px;top:198px;color:#b8b8b8;font-size:12px;font-weight:normal;">Z</span>
<div style="left:1308px;top:195px;width:84px;height:18px;background:#2a2a2a;border:1px solid #262626;border-top-color:#1a1a1a;border-radius:2px;overflow:hidden"></div>
<span class="t" style="left:1311px;top:198px;width:80px;overflow:hidden;color:#d0d0d0">0</span>
<span class="t" style="left:889px;top:218px;color:#b8b8b8;font-size:12px;font-weight:normal;">Scale</span>
<span class="t" style="left:1087px;top:218px;color:#b8b8b8;font-size:12px;font-weight:normal;">X</span>
<div style="left:1101px;top:215px;width:84px;height:18px;background:#2a2a2a;border:1px solid #262626;border-top-color:#1a1a1a;border-radius:2px;overflow:hidden"></div>
<span class="t" style="left:1104px;top:218px;width:80px;overflow:hidden;color:#d0d0d0">1</span>
<span class="t" style="left:1193px;top:218px;color:#b8b8b8;font-size:12px;font-weight:normal;">Y</span>
<div style="left:1204px;top:215px;width:84px;height:18px;background:#2a2a2a;border:1px solid #262626;border-top-color:#1a1a1a;border-radius:2px;overflow:hidden"></div>
<span class="t" style="left:1207px;top:218px;width:80px;overflow:hidden;color:#d0d0d0">1</span>
<span class="t" style="left:1296px;top:218px;color:#b8b8b8;font-size:12px;font-weight:normal;">Z</span>
<div style="left:1308px;top:215px;width:84px;height:18px;background:#2a2a2a;border:1px solid #262626;border-top-color:#1a1a1a;border-radius:2px;overflow:hidden"></div>
<span class="t" style="left:1311px;top:218px;width:80px;overflow:hidden;color:#d0d0d0">1</span>
<svg style="position:absolute;left:1064px;top:219px;" width="15" height="11" viewBox="0 0 15 11"><path d="M6 2 H3.5 a3.5 3.5 0 0 0 0 7 H6 M9 2 H11.5 a3.5 3.5 0 0 1 0 7 H9" fill="none" stroke="#a8a8a8" stroke-width="1.3"/><path d="M1 10.5 L14 0.5" stroke="#a8a8a8" stroke-width="1.2"/></svg>
<div style="left:869px;top:242px;width:528px;height:1px;background:#1e1e1e;"></div>
<div style="left:869px;top:243px;width:528px;height:20px;background:#3e3e3e;"></div>
<div style="left:869px;top:263px;width:528px;height:1px;background:#2f2f2f;"></div>
<div style="left:876px;top:249px;width:0;height:0;border-left:4.5px solid transparent;border-right:4.5px solid transparent;border-top:8px solid #5e5e5e"></div>
<svg style="position:absolute;left:889px;top:245px" width="17" height="17" viewBox="0 0 17 17"><path d="M2 1 H8 L12 5 V9 H2 Z" fill="#57aee8"/><path d="M2 1 V15" stroke="#57aee8" stroke-width="2"/><ellipse cx="11" cy="12" rx="5.5" ry="3.5" fill="#3e3e3e" stroke="#d8d8d8" stroke-width="1.5"/><circle cx="11" cy="12" r="1.6" fill="#d8d8d8"/></svg>
<div style="left:910px;top:246px;width:14px;height:14px;background:#2a2a2a;border:1px solid #222"></div>
<svg style="position:absolute;left:911px;top:247px;" width="12" height="12" viewBox="0 0 12 12"><path d="M2.5 6 L5 8.5 L9.5 3.5" fill="none" stroke="#e0e0e0" stroke-width="1.6"/></svg>
<span class="t" style="left:930px;top:247px;color:#d0d0d0;font-size:12px;font-weight:bold;">Skinned Mesh Renderer</span>
<svg style="position:absolute;left:1336px;top:246px;" width="14" height="14" viewBox="0 0 14 14"><circle cx="7" cy="7" r="6" fill="#c8c8c8"/><text x="7" y="10.5" font-size="9" font-weight="bold" text-anchor="middle" fill="#3e3e3e" font-family="Liberation Sans">?</text></svg>
<svg style="position:absolute;left:1356px;top:246px;" width="14" height="14" viewBox="0 0 14 14"><path d="M1 4 H13 M1 10 H13" stroke="#c8c8c8" stroke-width="1.3"/><path d="M5 1.5 V6.5 M9 7.5 V12.5" stroke="#c8c8c8" stroke-width="1.6"/></svg>
<svg style="position:absolute;left:1381px;top:247px;" width="4" height="12" viewBox="0 0 4 12"><circle cx="2" cy="2" r="1.3" fill="#c4c4c4"/><circle cx="2" cy="6" r="1.3" fill="#c4c4c4"/><circle cx="2" cy="10" r="1.3" fill="#c4c4c4"/></svg>
<div style="left:1085px;top:269px;width:31px;height:21px;background:#575757;border-radius:2px"></div>
<svg style="position:absolute;left:1092px;top:272px;" width="17" height="14" viewBox="0 0 17 14"><path d="M3 11 L8.5 2.5 L14 11" fill="none" stroke="#c8c8c8" stroke-width="1.2"/><rect x="1" y="9.5" width="4" height="3" fill="#575757" stroke="#c8c8c8" stroke-width="1"/><rect x="12" y="9.5" width="4" height="3" fill="#575757" stroke="#c8c8c8" stroke-width="1"/><rect x="6.5" y="1" width="4" height="3" fill="#575757" stroke="#c8c8c8" stroke-width="1"/></svg>
<span class="t" style="left:1124px;top:276px;color:#c4c4c4;font-size:12px;font-weight:normal;">Edit Bounds</span>
<span class="t" style="left:889px;top:297px;color:#b8b8b8;font-size:12px;font-weight:normal;">Bounds</span>
<span class="t" style="left:1034px;top:316px;color:#b8b8b8">Center</span>
<span class="t" style="left:1087px;top:316px;color:#b8b8b8;font-size:12px;font-weight:normal;">X</span>
<div style="left:1101px;top:313px;width:84px;height:18px;background:#2a2a2a;border:1px solid #262626;border-top-color:#1a1a1a;border-radius:2px"></div>
<span class="t" style="left:1104px;top:316px;width:79px;overflow:hidden;color:#d0d0d0;letter-spacing:0.4px">5.215406e-08</span>
<span class="t" style="left:1193px;top:316px;color:#b8b8b8;font-size:12px;font-weight:normal;">Y</span>
<div style="left:1204px;top:313px;width:84px;height:18px;background:#2a2a2a;border:1px solid #262626;border-top-color:#1a1a1a;border-radius:2px"></div>
<span class="t" style="left:1207px;top:316px;width:79px;overflow:hidden;color:#d0d0d0;letter-spacing:0.4px">1.62806</span>
<span class="t" style="left:1296px;top:316px;color:#b8b8b8;font-size:12px;font-weight:normal;">Z</span>
<div style="left:1308px;top:313px;width:84px;height:18px;background:#2a2a2a;border:1px solid #262626;border-top-color:#1a1a1a;border-radius:2px"></div>
<span class="t" style="left:1311px;top:316px;width:79px;overflow:hidden;color:#d0d0d0;letter-spacing:0.4px">0.01483387</span>
<span class="t" style="left:1034px;top:336px;color:#b8b8b8">Extent</span>
<span class="t" style="left:1087px;top:336px;color:#b8b8b8;font-size:12px;font-weight:normal;">X</span>
<div style="left:1101px;top:333px;width:84px;height:18px;background:#2a2a2a;border:1px solid #262626;border-top-color:#1a1a1a;border-radius:2px"></div>
<span class="t" style="left:1104px;top:336px;width:79px;overflow:hidden;color:#d0d0d0;letter-spacing:0.4px">0.09875064</span>
<span class="t" style="left:1193px;top:336px;color:#b8b8b8;font-size:12px;font-weight:normal;">Y</span>
<div style="left:1204px;top:333px;width:84px;height:18px;background:#2a2a2a;border:1px solid #262626;border-top-color:#1a1a1a;border-radius:2px"></div>
<span class="t" style="left:1207px;top:336px;width:79px;overflow:hidden;color:#d0d0d0;letter-spacing:0.4px">0.1147472</span>
<span class="t" style="left:1296px;top:336px;color:#b8b8b8;font-size:12px;font-weight:normal;">Z</span>
<div style="left:1308px;top:333px;width:84px;height:18px;background:#2a2a2a;border:1px solid #262626;border-top-color:#1a1a1a;border-radius:2px"></div>
<span class="t" style="left:1311px;top:336px;width:79px;overflow:hidden;color:#d0d0d0;letter-spacing:0.4px">0.06925867</span>
<div style="left:869px;top:352px;width:3px;height:20px;background:#3a88b4;"></div>
<div style="left:877px;top:358px;width:0;height:0;border-left:4.5px solid transparent;border-right:4.5px solid transparent;border-top:8px solid #5e5e5e"></div>
<span class="t" style="left:888px;top:356px;color:#d0d0d0;font-size:12px;font-weight:bold;">BlendShapes</span>
<span class="t" style="left:903px;top:376px;color:#b8b8b8;font-size:12px;font-weight:normal;">Fcl_ALL_Neutral</span>
<div style="left:1091px;top:381px;width:246px;height:2px;background:#5e5e5e;"></div>
<svg style="position:absolute;left:1086px;top:377px;" width="10" height="10" viewBox="0 0 10 10"><circle cx="5" cy="5" r="5" fill="#999999"/></svg>
<div style="left:1343px;top:373px;width:49px;height:18px;background:#2a2a2a;border:1px solid #262626;border-top-color:#1a1a1a;border-radius:2px"></div>
<span class="t" style="left:1346px;top:376px;color:#d0d0d0;font-size:12px;font-weight:normal;">0</span>
<span class="t" style="left:903px;top:396px;color:#b8b8b8;font-size:12px;font-weight:normal;">Fcl_ALL_Angry</span>
<div style="left:1091px;top:401px;width:246px;height:2px;background:#5e5e5e;"></div>
<svg style="position:absolute;left:1086px;top:397px;" width="10" height="10" viewBox="0 0 10 10"><circle cx="5" cy="5" r="5" fill="#e8e8e8"/></svg>
<div style="left:1343px;top:393px;width:49px;height:18px;background:#2a2a2a;border:1px solid #262626;border-top-color:#1a1a1a;border-radius:2px"></div>
<span class="t" style="left:1346px;top:396px;color:#d0d0d0;font-size:12px;font-weight:normal;">0</span>
<span class="t" style="left:903px;top:416px;color:#b8b8b8;font-size:12px;font-weight:normal;">Fcl_ALL_Fun</span>
<div style="left:1091px;top:421px;width:246px;height:2px;background:#5e5e5e;"></div>
<svg style="position:absolute;left:1086px;top:417px;" width="10" height="10" viewBox="0 0 10 10"><circle cx="5" cy="5" r="5" fill="#999999"/></svg>
<div style="left:1343px;top:413px;width:49px;height:18px;background:#2a2a2a;border:1px solid #262626;border-top-color:#1a1a1a;border-radius:2px"></div>
<span class="t" style="left:1346px;top:416px;color:#d0d0d0;font-size:12px;font-weight:normal;">0</span>
<span class="t" style="left:903px;top:436px;color:#b8b8b8;font-size:12px;font-weight:normal;">Fcl_ALL_Joy</span>
<div style="left:1091px;top:441px;width:246px;height:2px;background:#5e5e5e;"></div>
<svg style="position:absolute;left:1086px;top:437px;" width="10" height="10" viewBox="0 0 10 10"><circle cx="5" cy="5" r="5" fill="#999999"/></svg>
<div style="left:1343px;top:433px;width:49px;height:18px;background:#2a2a2a;border:1px solid #262626;border-top-color:#1a1a1a;border-radius:2px"></div>
<span class="t" style="left:1346px;top:436px;color:#d0d0d0;font-size:12px;font-weight:normal;">0</span>
<span class="t" style="left:903px;top:456px;color:#b8b8b8;font-size:12px;font-weight:normal;">Fcl_ALL_Sorrow</span>
<div style="left:1091px;top:461px;width:246px;height:2px;background:#5e5e5e;"></div>
<svg style="position:absolute;left:1086px;top:457px;" width="10" height="10" viewBox="0 0 10 10"><circle cx="5" cy="5" r="5" fill="#999999"/></svg>
<div style="left:1343px;top:453px;width:49px;height:18px;background:#2a2a2a;border:1px solid #262626;border-top-color:#1a1a1a;border-radius:2px"></div>
<span class="t" style="left:1346px;top:456px;color:#d0d0d0;font-size:12px;font-weight:normal;">0</span>
<span class="t" style="left:903px;top:476px;color:#b8b8b8;font-size:12px;font-weight:normal;">Fcl_ALL_Surprised</span>
<div style="left:1091px;top:481px;width:246px;height:2px;background:#5e5e5e;"></div>
<svg style="position:absolute;left:1086px;top:477px;" width="10" height="10" viewBox="0 0 10 10"><circle cx="5" cy="5" r="5" fill="#999999"/></svg>
<div style="left:1343px;top:473px;width:49px;height:18px;background:#2a2a2a;border:1px solid #262626;border-top-color:#1a1a1a;border-radius:2px"></div>
<span class="t" style="left:1346px;top:476px;color:#d0d0d0;font-size:12px;font-weight:normal;">0</span>
<span class="t" style="left:903px;top:496px;color:#b8b8b8;font-size:12px;font-weight:normal;">Fcl_BRW_Angry</span>
<div style="left:1091px;top:501px;width:246px;height:2px;background:#5e5e5e;"></div>
<svg style="position:absolute;left:1086px;top:497px;" width="10" height="10" viewBox="0 0 10 10"><circle cx="5" cy="5" r="5" fill="#999999"/></svg>
<div style="left:1343px;top:493px;width:49px;height:18px;background:#2a2a2a;border:1px solid #262626;border-top-color:#1a1a1a;border-radius:2px"></div>
<span class="t" style="left:1346px;top:496px;color:#d0d0d0;font-size:12px;font-weight:normal;">0</span>
<span class="t" style="left:903px;top:516px;color:#b8b8b8;font-size:12px;font-weight:normal;">Fcl_BRW_Fun</span>
<div style="left:1091px;top:521px;width:246px;height:2px;background:#5e5e5e;"></div>
<svg style="position:absolute;left:1086px;top:517px;" width="10" height="10" viewBox="0 0 10 10"><circle cx="5" cy="5" r="5" fill="#999999"/></svg>
<div style="left:1343px;top:513px;width:49px;height:18px;background:#2a2a2a;border:1px solid #262626;border-top-color:#1a1a1a;border-radius:2px"></div>
<span class="t" style="left:1346px;top:516px;color:#d0d0d0;font-size:12px;font-weight:normal;">0</span>
<span class="t" style="left:903px;top:536px;color:#b8b8b8;font-size:12px;font-weight:normal;">Fcl_BRW_Joy</span>
<div style="left:1091px;top:541px;width:246px;height:2px;background:#5e5e5e;"></div>
<svg style="position:absolute;left:1086px;top:537px;" width="10" height="10" viewBox="0 0 10 10"><circle cx="5" cy="5" r="5" fill="#999999"/></svg>
<div style="left:1343px;top:533px;width:49px;height:18px;background:#2a2a2a;border:1px solid #262626;border-top-color:#1a1a1a;border-radius:2px"></div>
<span class="t" style="left:1346px;top:536px;color:#d0d0d0;font-size:12px;font-weight:normal;">0</span>
<span class="t" style="left:903px;top:556px;color:#b8b8b8;font-size:12px;font-weight:normal;">Fcl_BRW_Sorrow</span>
<div style="left:1091px;top:561px;width:246px;height:2px;background:#5e5e5e;"></div>
<svg style="position:absolute;left:1086px;top:557px;" width="10" height="10" viewBox="0 0 10 10"><circle cx="5" cy="5" r="5" fill="#999999"/></svg>
<div style="left:1343px;top:553px;width:49px;height:18px;background:#2a2a2a;border:1px solid #262626;border-top-color:#1a1a1a;border-radius:2px"></div>
<span class="t" style="left:1346px;top:556px;color:#d0d0d0;font-size:12px;font-weight:normal;">0</span>
<span class="t" style="left:903px;top:576px;color:#b8b8b8;font-size:12px;font-weight:normal;">Fcl_BRW_Surprised</span>
<div style="left:1091px;top:581px;width:246px;height:2px;background:#5e5e5e;"></div>
<svg style="position:absolute;left:1086px;top:577px;" width="10" height="10" viewBox="0 0 10 10"><circle cx="5" cy="5" r="5" fill="#999999"/></svg>
<div style="left:1343px;top:573px;width:49px;height:18px;background:#2a2a2a;border:1px solid #262626;border-top-color:#1a1a1a;border-radius:2px"></div>
<span class="t" style="left:1346px;top:576px;color:#d0d0d0;font-size:12px;font-weight:normal;">0</span>
<span class="t" style="left:903px;top:596px;color:#b8b8b8;font-size:12px;font-weight:normal;">Fcl_EYE_Natural</span>
<div style="left:1091px;top:601px;width:246px;height:2px;background:#5e5e5e;"></div>
<svg style="position:absolute;left:1086px;top:597px;" width="10" height="10" viewBox="0 0 10 10"><circle cx="5" cy="5" r="5" fill="#999999"/></svg>
<div style="left:1343px;top:593px;width:49px;height:18px;background:#2a2a2a;border:1px solid #262626;border-top-color:#1a1a1a;border-radius:2px"></div>
<span class="t" style="left:1346px;top:596px;color:#d0d0d0;font-size:12px;font-weight:normal;">0</span>
<span class="t" style="left:903px;top:616px;color:#b8b8b8;font-size:12px;font-weight:normal;">Fcl_EYE_Angry</span>
<div style="left:1091px;top:621px;width:246px;height:2px;background:#5e5e5e;"></div>
<svg style="position:absolute;left:1086px;top:617px;" width="10" height="10" viewBox="0 0 10 10"><circle cx="5" cy="5" r="5" fill="#999999"/></svg>
<div style="left:1343px;top:613px;width:49px;height:18px;background:#2a2a2a;border:1px solid #262626;border-top-color:#1a1a1a;border-radius:2px"></div>
<span class="t" style="left:1346px;top:616px;color:#d0d0d0;font-size:12px;font-weight:normal;">0</span>
<span class="t" style="left:903px;top:636px;color:#b8b8b8;font-size:12px;font-weight:normal;">Fcl_EYE_Close</span>
<div style="left:1091px;top:641px;width:246px;height:2px;background:#5e5e5e;"></div>
<svg style="position:absolute;left:1086px;top:637px;" width="10" height="10" viewBox="0 0 10 10"><circle cx="5" cy="5" r="5" fill="#999999"/></svg>
<div style="left:1343px;top:633px;width:49px;height:18px;background:#2a2a2a;border:1px solid #262626;border-top-color:#1a1a1a;border-radius:2px"></div>
<span class="t" style="left:1346px;top:636px;color:#d0d0d0;font-size:12px;font-weight:normal;">0</span>
<span class="t" style="left:903px;top:656px;color:#b8b8b8;font-size:12px;font-weight:normal;">Fcl_EYE_Close_R</span>
<div style="left:1091px;top:661px;width:246px;height:2px;background:#5e5e5e;"></div>
<svg style="position:absolute;left:1086px;top:657px;" width="10" height="10" viewBox="0 0 10 10"><circle cx="5" cy="5" r="5" fill="#999999"/></svg>
<div style="left:1343px;top:653px;width:49px;height:18px;background:#2a2a2a;border:1px solid #262626;border-top-color:#1a1a1a;border-radius:2px"></div>
<span class="t" style="left:1346px;top:656px;color:#d0d0d0;font-size:12px;font-weight:normal;">0</span>
<span class="t" style="left:903px;top:676px;color:#b8b8b8;font-size:12px;font-weight:normal;">Fcl_EYE_Close_L</span>
<div style="left:1091px;top:681px;width:246px;height:2px;background:#5e5e5e;"></div>
<svg style="position:absolute;left:1086px;top:677px;" width="10" height="10" viewBox="0 0 10 10"><circle cx="5" cy="5" r="5" fill="#999999"/></svg>
<div style="left:1343px;top:673px;width:49px;height:18px;background:#2a2a2a;border:1px solid #262626;border-top-color:#1a1a1a;border-radius:2px"></div>
<span class="t" style="left:1346px;top:676px;color:#d0d0d0;font-size:12px;font-weight:normal;">0</span>
<span class="t" style="left:903px;top:696px;color:#b8b8b8;font-size:12px;font-weight:normal;">Fcl_EYE_Fun</span>
<div style="left:1091px;top:701px;width:246px;height:2px;background:#5e5e5e;"></div>
<svg style="position:absolute;left:1086px;top:697px;" width="10" height="10" viewBox="0 0 10 10"><circle cx="5" cy="5" r="5" fill="#999999"/></svg>
<div style="left:1343px;top:693px;width:49px;height:18px;background:#2a2a2a;border:1px solid #262626;border-top-color:#1a1a1a;border-radius:2px"></div>
<span class="t" style="left:1346px;top:696px;color:#d0d0d0;font-size:12px;font-weight:normal;">0</span>
<span class="t" style="left:903px;top:716px;color:#b8b8b8;font-size:12px;font-weight:normal;">Fcl_EYE_Joy</span>
<div style="left:1091px;top:721px;width:246px;height:2px;background:#5e5e5e;"></div>
<svg style="position:absolute;left:1086px;top:717px;" width="10" height="10" viewBox="0 0 10 10"><circle cx="5" cy="5" r="5" fill="#999999"/></svg>
<div style="left:1343px;top:713px;width:49px;height:18px;background:#2a2a2a;border:1px solid #262626;border-top-color:#1a1a1a;border-radius:2px"></div>
<span class="t" style="left:1346px;top:716px;color:#d0d0d0;font-size:12px;font-weight:normal;">0</span>
<span class="t" style="left:903px;top:736px;color:#b8b8b8;font-size:12px;font-weight:normal;">Fcl_EYE_Joy_R</span>
<div style="left:1091px;top:741px;width:246px;height:2px;background:#5e5e5e;"></div>
<svg style="position:absolute;left:1086px;top:737px;" width="10" height="10" viewBox="0 0 10 10"><circle cx="5" cy="5" r="5" fill="#999999"/></svg>
<div style="left:1343px;top:733px;width:49px;height:18px;background:#2a2a2a;border:1px solid #262626;border-top-color:#1a1a1a;border-radius:2px"></div>
<span class="t" style="left:1346px;top:736px;color:#d0d0d0;font-size:12px;font-weight:normal;">0</span>
<span class="t" style="left:903px;top:756px;color:#b8b8b8;font-size:12px;font-weight:normal;">Fcl_EYE_Joy_L</span>
<div style="left:1091px;top:761px;width:246px;height:2px;background:#5e5e5e;"></div>
<svg style="position:absolute;left:1086px;top:757px;" width="10" height="10" viewBox="0 0 10 10"><circle cx="5" cy="5" r="5" fill="#999999"/></svg>
<div style="left:1343px;top:753px;width:49px;height:18px;background:#2a2a2a;border:1px solid #262626;border-top-color:#1a1a1a;border-radius:2px"></div>
<span class="t" style="left:1346px;top:756px;color:#d0d0d0;font-size:12px;font-weight:normal;">0</span>
<span class="t" style="left:903px;top:776px;color:#b8b8b8;font-size:12px;font-weight:normal;">Fcl_EYE_Sorrow</span>
<div style="left:1091px;top:781px;width:246px;height:2px;background:#5e5e5e;"></div>
<svg style="position:absolute;left:1086px;top:777px;" width="10" height="10" viewBox="0 0 10 10"><circle cx="5" cy="5" r="5" fill="#999999"/></svg>
<div style="left:1343px;top:773px;width:49px;height:18px;background:#2a2a2a;border:1px solid #262626;border-top-color:#1a1a1a;border-radius:2px"></div>
<span class="t" style="left:1346px;top:776px;color:#d0d0d0;font-size:12px;font-weight:normal;">0</span>
<span class="t" style="left:903px;top:796px;color:#b8b8b8;font-size:12px;font-weight:normal;">Fcl_EYE_Surprised</span>
<div style="left:1091px;top:801px;width:246px;height:2px;background:#5e5e5e;"></div>
<svg style="position:absolute;left:1086px;top:797px;" width="10" height="10" viewBox="0 0 10 10"><circle cx="5" cy="5" r="5" fill="#999999"/></svg>
<div style="left:1343px;top:793px;width:49px;height:18px;background:#2a2a2a;border:1px solid #262626;border-top-color:#1a1a1a;border-radius:2px"></div>
<span class="t" style="left:1346px;top:796px;color:#d0d0d0;font-size:12px;font-weight:normal;">0</span>
<span class="t" style="left:903px;top:816px;color:#b8b8b8;font-size:12px;font-weight:normal;">Fcl_EYE_Spread</span>
<div style="left:1091px;top:821px;width:246px;height:2px;background:#5e5e5e;"></div>
<svg style="position:absolute;left:1086px;top:817px;" width="10" height="10" viewBox="0 0 10 10"><circle cx="5" cy="5" r="5" fill="#999999"/></svg>
<div style="left:1343px;top:813px;width:49px;height:18px;background:#2a2a2a;border:1px solid #262626;border-top-color:#1a1a1a;border-radius:2px"></div>
<span class="t" style="left:1346px;top:816px;color:#d0d0d0;font-size:12px;font-weight:normal;">0</span>
<span class="t" style="left:903px;top:836px;color:#b8b8b8;font-size:12px;font-weight:normal;">Fcl_EYE_Iris_Hide</span>
<div style="left:1091px;top:841px;width:246px;height:2px;background:#5e5e5e;"></div>
<svg style="position:absolute;left:1086px;top:837px;" width="10" height="10" viewBox="0 0 10 10"><circle cx="5" cy="5" r="5" fill="#999999"/></svg>
<div style="left:1343px;top:833px;width:49px;height:18px;background:#2a2a2a;border:1px solid #262626;border-top-color:#1a1a1a;border-radius:2px"></div>
<span class="t" style="left:1346px;top:836px;color:#d0d0d0;font-size:12px;font-weight:normal;">0</span>
<span class="t" style="left:903px;top:856px;color:#b8b8b8;font-size:12px;font-weight:normal;">Fcl_EYE_Highlight_Hide</span>
<div style="left:1091px;top:861px;width:246px;height:2px;background:#5e5e5e;"></div>
<svg style="position:absolute;left:1086px;top:857px;" width="10" height="10" viewBox="0 0 10 10"><circle cx="5" cy="5" r="5" fill="#999999"/></svg>
<div style="left:1343px;top:853px;width:49px;height:18px;background:#2a2a2a;border:1px solid #262626;border-top-color:#1a1a1a;border-radius:2px"></div>
<span class="t" style="left:1346px;top:856px;color:#d0d0d0;font-size:12px;font-weight:normal;">0</span>
<span class="t" style="left:903px;top:876px;color:#b8b8b8;font-size:12px;font-weight:normal;">Fcl_MTH_Close</span>
<div style="left:1091px;top:881px;width:246px;height:2px;background:#5e5e5e;"></div>
<svg style="position:absolute;left:1086px;top:877px;" width="10" height="10" viewBox="0 0 10 10"><circle cx="5" cy="5" r="5" fill="#999999"/></svg>
<div style="left:1343px;top:873px;width:49px;height:18px;background:#2a2a2a;border:1px solid #262626;border-top-color:#1a1a1a;border-radius:2px"></div>
<span class="t" style="left:1346px;top:876px;color:#d0d0d0;font-size:12px;font-weight:normal;">0</span>
<span class="t" style="left:903px;top:896px;color:#b8b8b8;font-size:12px;font-weight:normal;">Fcl_MTH_Up</span>
<div style="left:1091px;top:901px;width:246px;height:2px;background:#5e5e5e;"></div>
<svg style="position:absolute;left:1086px;top:897px;" width="10" height="10" viewBox="0 0 10 10"><circle cx="5" cy="5" r="5" fill="#999999"/></svg>
<div style="left:1343px;top:893px;width:49px;height:18px;background:#2a2a2a;border:1px solid #262626;border-top-color:#1a1a1a;border-radius:2px"></div>
<span class="t" style="left:1346px;top:896px;color:#d0d0d0;font-size:12px;font-weight:normal;">0</span>
<span class="t" style="left:903px;top:916px;color:#b8b8b8;font-size:12px;font-weight:normal;">Fcl_MTH_Down</span>
<div style="left:1091px;top:921px;width:246px;height:2px;background:#5e5e5e;"></div>
<svg style="position:absolute;left:1086px;top:917px;" width="10" height="10" viewBox="0 0 10 10"><circle cx="5" cy="5" r="5" fill="#999999"/></svg>
<div style="left:1343px;top:913px;width:49px;height:18px;background:#2a2a2a;border:1px solid #262626;border-top-color:#1a1a1a;border-radius:2px"></div>
<span class="t" style="left:1346px;top:916px;color:#d0d0d0;font-size:12px;font-weight:normal;">0</span>
<span class="t" style="left:903px;top:936px;color:#b8b8b8;font-size:12px;font-weight:normal;">Fcl_MTH_Angry</span>
<div style="left:1091px;top:941px;width:246px;height:2px;background:#5e5e5e;"></div>
<svg style="position:absolute;left:1086px;top:937px;" width="10" height="10" viewBox="0 0 10 10"><circle cx="5" cy="5" r="5" fill="#999999"/></svg>
<div style="left:1343px;top:933px;width:49px;height:18px;background:#2a2a2a;border:1px solid #262626;border-top-color:#1a1a1a;border-radius:2px"></div>
<span class="t" style="left:1346px;top:936px;color:#d0d0d0;font-size:12px;font-weight:normal;">0</span>
<span class="t" style="left:903px;top:956px;color:#b8b8b8;font-size:12px;font-weight:normal;">Fcl_MTH_Small</span>
<div style="left:1091px;top:961px;width:246px;height:2px;background:#5e5e5e;"></div>
<svg style="position:absolute;left:1086px;top:957px;" width="10" height="10" viewBox="0 0 10 10"><circle cx="5" cy="5" r="5" fill="#999999"/></svg>
<div style="left:1343px;top:953px;width:49px;height:18px;background:#2a2a2a;border:1px solid #262626;border-top-color:#1a1a1a;border-radius:2px"></div>
<span class="t" style="left:1346px;top:956px;color:#d0d0d0;font-size:12px;font-weight:normal;">0</span>
<span class="t" style="left:903px;top:976px;color:#b8b8b8;font-size:12px;font-weight:normal;">Fcl_MTH_Large</span>
<div style="left:1091px;top:981px;width:246px;height:2px;background:#5e5e5e;"></div>
<svg style="position:absolute;left:1086px;top:977px;" width="10" height="10" viewBox="0 0 10 10"><circle cx="5" cy="5" r="5" fill="#999999"/></svg>
<div style="left:1343px;top:973px;width:49px;height:18px;background:#2a2a2a;border:1px solid #262626;border-top-color:#1a1a1a;border-radius:2px"></div>
<span class="t" style="left:1346px;top:976px;color:#d0d0d0;font-size:12px;font-weight:normal;">0</span>
<span class="t" style="left:903px;top:996px;color:#b8b8b8;font-size:12px;font-weight:normal;">Fcl_MTH_Neutral</span>
<div style="left:1091px;top:1001px;width:246px;height:2px;background:#5e5e5e;"></div>
<svg style="position:absolute;left:1086px;top:997px;" width="10" height="10" viewBox="0 0 10 10"><circle cx="5" cy="5" r="5" fill="#999999"/></svg>
<div style="left:1343px;top:993px;width:49px;height:18px;background:#2a2a2a;border:1px solid #262626;border-top-color:#1a1a1a;border-radius:2px"></div>
<span class="t" style="left:1346px;top:996px;color:#d0d0d0;font-size:12px;font-weight:normal;">0</span>
<div style="left:1343px;top:1011px;width:49px;height:5px;background:#2a2a2a;border-top:1px solid #1a1a1a;border-radius:2px 2px 0 0"></div>
<svg style="position:absolute;left:1096px;top:395px;" width="14" height="21" viewBox="0 0 14 21"><path d="M1 1 L1 16 L4.5 12.5 L7.5 19 L10 18 L7 11.5 L12 11.5 Z" fill="#fff" stroke="#000" stroke-width="1"/></svg>
<div style="left:1410px;top:70px;width:1px;height:946px;background:#191919;"></div>
<div style="left:1411px;top:71px;width:222px;height:18px;background:#282828;"></div>
<div style="left:1411px;top:71px;width:96px;height:18px;background:#3c3c3c;"></div>
<div style="left:1411px;top:71px;width:96px;height:2px;background:#4b78a8;"></div>
<svg style="position:absolute;left:1419px;top:75px;" width="14" height="11" viewBox="0 0 14 11"><path d="M4 1.5 H13 M4 5.5 H13 M4 9.5 H13" stroke="#c8c8c8" stroke-width="1.3"/><path d="M1.5 1.5 V9.5 M1.5 5.5 H3 M1.5 9.5 H3" stroke="#c8c8c8" stroke-width="0.8"/></svg>
<span class="t" style="left:1435px;top:75px;color:#c4c4c4;font-size:12px;font-weight:normal;">Hierarchy</span>
<svg style="position:absolute;left:1597px;top:74px;" width="11" height="12" viewBox="0 0 11 12"><path d="M2.6 5.8 V3.2 a2.3 2.3 0 0 1 4.6 0 V3.6" fill="none" stroke="#c4c4c4" stroke-width="1.2"/><rect x="0.9" y="6.2" width="7.8" height="4.6" fill="none" stroke="#c4c4c4" stroke-width="1.3"/></svg>
<svg style="position:absolute;left:1617px;top:74px;" width="4" height="12" viewBox="0 0 4 12"><circle cx="2" cy="2" r="1.3" fill="#c4c4c4"/><circle cx="2" cy="6" r="1.3" fill="#c4c4c4"/><circle cx="2" cy="10" r="1.3" fill="#c4c4c4"/></svg>
<div style="left:1411px;top:89px;width:222px;height:21px;background:#3c3c3c;"></div>
<svg style="position:absolute;left:1418px;top:93px;" width="14" height="14" viewBox="0 0 14 14"><path d="M7 1 V13 M1 7 H13" stroke="#d0d0d0" stroke-width="2"/></svg>
<div style="left:1434px;top:98px;width:0;height:0;border-left:4.0px solid transparent;border-right:4.0px solid transparent;border-top:5px solid #c4c4c4"></div>
<div style="left:1455px;top:92px;width:176px;height:16px;background:#2a2a2a;border:1px solid #212121;border-top-color:#1a1a1a;border-radius:4px 0 0 4px"></div>
<svg style="position:absolute;left:1460px;top:95px;" width="12" height="10" viewBox="0 0 12 10"><circle cx="4" cy="4" r="2.8" fill="none" stroke="#aaa" stroke-width="1.2"/><path d="M6 6 L9 9" stroke="#aaa" stroke-width="1.2"/><path d="M8 3 L11 3 L9.5 5 Z" fill="#aaa"/></svg>
<span class="t" style="left:1472px;top:94px;color:#707070;font-size:12px;font-weight:normal;">All</span>
<div style="left:1615px;top:92px;width:16px;height:16px;background:#2a2a2a;border:1px solid #212121"></div>
<svg style="position:absolute;left:1616px;top:93px;" width="14" height="14" viewBox="0 0 14 14"><rect x="1.5" y="5.5" width="7" height="7" fill="none" stroke="#c8c8c8" stroke-width="1.1"/><path d="M5 1.5 H12.5 V9" fill="none" stroke="#c8c8c8" stroke-width="1.1"/><path d="M5 9 L11 3 M7.5 3 H11 V6.5" fill="none" stroke="#c8c8c8" stroke-width="1.1"/></svg>
<div style="left:1411px;top:110px;width:222px;height:906px;background:#393939;"></div>
<div style="left:1411px;top:110px;width:32px;height:906px;background:#333333;"></div>
<div style="left:1411px;top:110px;width:222px;height:16px;background:#2a2a2a;"></div>
<div style="left:1411px;top:126px;width:222px;height:1px;background:#323232;"></div>
<div style="left:1445px;top:114px;width:0;height:0;border-left:4.5px solid transparent;border-right:4.5px solid transparent;border-top:8px solid #6a6a6a"></div>
<svg style="position:absolute;left:1458px;top:111px;" width="14" height="14" viewBox="0 0 14 14"><path d="M7 1.2 L12.6 4.4 V9.6 L7 12.8 L1.4 9.6 V4.4 Z" fill="none" stroke="#e8e8e8" stroke-width="2.2" stroke-linejoin="round"/><path d="M7 7 L7 12 M7 7 L2.6 4.6 M7 7 L11.4 4.6" stroke="#e8e8e8" stroke-width="2"/><path d="M7 0 V2.6 M0.5 10.2 L2.7 9 M13.5 10.2 L11.3 9" stroke="#2a2a2a" stroke-width="1.4"/></svg>
<span class="t" style="left:1476px;top:112px;color:#d8d8d8;font-size:12px;font-weight:bold;">SampleScene*</span>
<svg style="position:absolute;left:1618px;top:112px;" width="4" height="12" viewBox="0 0 4 12"><circle cx="2" cy="2" r="1.3" fill="#c4c4c4"/><circle cx="2" cy="6" r="1.3" fill="#c4c4c4"/><circle cx="2" cy="10" r="1.3" fill="#c4c4c4"/></svg>
<div style="left:1411px;top:191px;width:222px;height:16px;background:#2c5d87;"></div>
<svg style="position:absolute;left:1472px;top:128px;" width="14" height="14" viewBox="0 0 14 14"><path d="M7 1 L12.8 4 V10 L7 13 L1.2 10 V4 Z" fill="none" stroke="#b8b8b8" stroke-width="1.1"/><path d="M1.2 4 L7 7 L12.8 4 M7 7 V13" fill="none" stroke="#b8b8b8" stroke-width="1.1"/></svg>
<span class="t" style="left:1489px;top:128px;color:#d2d2d2;font-size:12px;font-weight:normal;">Main Camera</span>
<svg style="position:absolute;left:1472px;top:144px;" width="14" height="14" viewBox="0 0 14 14"><path d="M7 1 L12.8 4 V10 L7 13 L1.2 10 V4 Z" fill="none" stroke="#b8b8b8" stroke-width="1.1"/><path d="M1.2 4 L7 7 L12.8 4 M7 7 V13" fill="none" stroke="#b8b8b8" stroke-width="1.1"/></svg>
<span class="t" style="left:1489px;top:144px;color:#d2d2d2;font-size:12px;font-weight:normal;">Directional Light</span>
<svg style="position:absolute;left:1472px;top:160px;" width="14" height="14" viewBox="0 0 14 14"><path d="M7 0.8 L13 3.8 V10.2 L7 13.2 L1 10.2 V3.8 Z" fill="#64c5f0"/><path d="M1 3.8 L7 6.8 L13 3.8 M7 6.8 V13.2" fill="none" stroke="#2d6f92" stroke-width="1.1"/></svg>
<div style="left:1443px;top:160px;width:2px;height:15px;background:#3a88b4;"></div>
<svg style="position:absolute;left:1621px;top:161px;" width="6" height="10" viewBox="0 0 6 10"><path d="M1 1 L5 5 L1 9" fill="none" stroke="#b0b0b0" stroke-width="1.2"/></svg>
<div style="left:1459px;top:164px;width:0;height:0;border-left:4.5px solid transparent;border-right:4.5px solid transparent;border-top:8px solid #606060"></div>
<span class="t" style="left:1489px;top:160px;color:#84a5dc;font-size:12px;font-weight:normal;">TestMan</span>
<svg style="position:absolute;left:1486px;top:176px;" width="14" height="14" viewBox="0 0 14 14"><path d="M7 1 L12.8 4 V10 L7 13 L1.2 10 V4 Z" fill="none" stroke="#c8c8c8" stroke-width="1.1"/><path d="M1.2 4 L7 7 L12.8 4 M7 7 V13" fill="none" stroke="#c8c8c8" stroke-width="1.1"/></svg>
<div style="left:1474px;top:178px;width:0;height:0;border-top:4.5px solid transparent;border-bottom:4.5px solid transparent;border-left:8px solid #606060"></div>
<span class="t" style="left:1503px;top:176px;color:#84a5dc;font-size:12px;font-weight:normal;">Root</span>
<svg style="position:absolute;left:1486px;top:192px;" width="14" height="14" viewBox="0 0 14 14"><path d="M7 1 L12.8 4 V10 L7 13 L1.2 10 V4 Z" fill="none" stroke="#c8c8c8" stroke-width="1.1"/><path d="M1.2 4 L7 7 L12.8 4 M7 7 V13" fill="none" stroke="#c8c8c8" stroke-width="1.1"/></svg>
<span class="t" style="left:1503px;top:192px;color:#ffffff;font-size:12px;font-weight:normal;">Face</span>
<svg style="position:absolute;left:1486px;top:208px;" width="14" height="14" viewBox="0 0 14 14"><path d="M7 1 L12.8 4 V10 L7 13 L1.2 10 V4 Z" fill="none" stroke="#c8c8c8" stroke-width="1.1"/><path d="M1.2 4 L7 7 L12.8 4 M7 7 V13" fill="none" stroke="#c8c8c8" stroke-width="1.1"/></svg>
<span class="t" style="left:1503px;top:208px;color:#84a5dc;font-size:12px;font-weight:normal;">Body</span>
<svg style="position:absolute;left:1486px;top:224px;" width="14" height="14" viewBox="0 0 14 14"><path d="M7 1 L12.8 4 V10 L7 13 L1.2 10 V4 Z" fill="none" stroke="#c8c8c8" stroke-width="1.1"/><path d="M1.2 4 L7 7 L12.8 4 M7 7 V13" fill="none" stroke="#c8c8c8" stroke-width="1.1"/></svg>
<span class="t" style="left:1503px;top:224px;color:#84a5dc;font-size:12px;font-weight:normal;">Hair</span>
<svg style="position:absolute;left:1486px;top:240px;" width="14" height="14" viewBox="0 0 14 14"><path d="M7 1 L12.8 4 V10 L7 13 L1.2 10 V4 Z" fill="none" stroke="#c8c8c8" stroke-width="1.1"/><path d="M1.2 4 L7 7 L12.8 4 M7 7 V13" fill="none" stroke="#c8c8c8" stroke-width="1.1"/></svg>
<span class="t" style="left:1503px;top:240px;color:#84a5dc;font-size:12px;font-weight:normal;">secondary</span>
<div style="left:1633px;top:70px;width:2px;height:946px;background:#191919;"></div>
<div style="left:1635px;top:71px;width:281px;height:18px;background:#282828;"></div>
<div style="left:1635px;top:71px;width:80px;height:18px;background:#3c3c3c;"></div>
<svg style="position:absolute;left:1641px;top:75px;" width="14" height="12" viewBox="0 0 14 12"><path d="M1 1 H6 L7.5 3 H13 V11 H1 Z" fill="#c8c8c8"/></svg>
<span class="t" style="left:1658px;top:75px;color:#c4c4c4;font-size:12px;font-weight:normal;">Project</span>
<svg style="position:absolute;left:1881px;top:74px;" width="11" height="12" viewBox="0 0 11 12"><path d="M2.6 5.8 V3.2 a2.3 2.3 0 0 1 4.6 0 V3.6" fill="none" stroke="#c4c4c4" stroke-width="1.2"/><rect x="0.9" y="6.2" width="7.8" height="4.6" fill="none" stroke="#c4c4c4" stroke-width="1.3"/></svg>
<svg style="position:absolute;left:1901px;top:74px;" width="4" height="12" viewBox="0 0 4 12"><circle cx="2" cy="2" r="1.3" fill="#c4c4c4"/><circle cx="2" cy="6" r="1.3" fill="#c4c4c4"/><circle cx="2" cy="10" r="1.3" fill="#c4c4c4"/></svg>
<div style="left:1635px;top:89px;width:281px;height:21px;background:#3c3c3c;"></div>
<svg style="position:absolute;left:1642px;top:93px;" width="14" height="14" viewBox="0 0 14 14"><path d="M7 1 V13 M1 7 H13" stroke="#d0d0d0" stroke-width="2"/></svg>
<div style="left:1658px;top:98px;width:0;height:0;border-left:4.0px solid transparent;border-right:4.0px solid transparent;border-top:5px solid #c4c4c4"></div>
<div style="left:1679px;top:92px;width:117px;height:16px;background:#2a2a2a;border:1px solid #212121;border-top-color:#1a1a1a;border-radius:4px 0 0 4px"></div>
<svg style="position:absolute;left:1685px;top:95px;" width="10" height="10" viewBox="0 0 10 10"><circle cx="4" cy="4" r="2.8" fill="none" stroke="#aaa" stroke-width="1.2"/><path d="M6 6 L9 9" stroke="#aaa" stroke-width="1.3"/></svg>
<div style="left:1780px;top:92px;width:16px;height:16px;background:#2a2a2a;border:1px solid #212121"></div>
<svg style="position:absolute;left:1781px;top:93px;" width="14" height="14" viewBox="0 0 14 14"><rect x="1.5" y="5.5" width="7" height="7" fill="none" stroke="#c8c8c8" stroke-width="1.1"/><path d="M5 1.5 H12.5 V9" fill="none" stroke="#c8c8c8" stroke-width="1.1"/><path d="M5 9 L11 3 M7.5 3 H11 V6.5" fill="none" stroke="#c8c8c8" stroke-width="1.1"/></svg>
<div style="left:1797px;top:89px;width:1px;height:21px;background:#303030;"></div>
<div style="left:1823px;top:89px;width:1px;height:21px;background:#303030;"></div>
<div style="left:1849px;top:89px;width:1px;height:21px;background:#303030;"></div>
<div style="left:1875px;top:89px;width:1px;height:21px;background:#303030;"></div>
<svg style="position:absolute;left:1803px;top:92px;" width="15" height="14" viewBox="0 0 15 14"><circle cx="5" cy="9.5" r="3.5" fill="#c8c8c8"/><rect x="2" y="1" width="6" height="5" fill="#c8c8c8"/><path d="M11 2 L15 9 H8 Z" fill="#c8c8c8"/></svg>
<svg style="position:absolute;left:1829px;top:93px;" width="14" height="14" viewBox="0 0 14 14"><path d="M7 1 H13 V7 L7 13 L1 7 Z" fill="#c8c8c8"/><circle cx="10" cy="4" r="1.2" fill="#3c3c3c"/></svg>
<svg style="position:absolute;left:1855px;top:92px;" width="15" height="15" viewBox="0 0 15 15"><circle cx="7.5" cy="7.5" r="7" fill="#d0d0d0"/><rect x="6.5" y="3" width="2" height="6" fill="#3c3c3c"/><rect x="6.5" y="10.5" width="2" height="2" fill="#3c3c3c"/></svg>
<svg style="position:absolute;left:1880px;top:93px;" width="17" height="13" viewBox="0 0 17 13"><path d="M1 6.5 Q8.5 -1 16 6.5 Q8.5 14 1 6.5 Z" fill="none" stroke="#c8c8c8" stroke-width="1.3"/><circle cx="8.5" cy="6.5" r="2.2" fill="#c8c8c8"/><path d="M3 12 L14 1" stroke="#c8c8c8" stroke-width="1.3"/></svg>
<span class="t" style="left:1898px;top:95px;color:#c4c4c4;font-size:12px;font-weight:normal;">14</span>
<div style="left:1635px;top:110px;width:281px;height:906px;background:#393939;"></div>
<div style="left:1635px;top:995px;width:281px;height:21px;background:#3e3e3e;"></div>
<svg style="position:absolute;left:1651px;top:116px;" width="15" height="13" viewBox="0 0 15 13"><path d="M1 1.5 H5.5 L7 3 H13 V5 H3.5 L1 11.5 Z" fill="#d0d0d0"/><path d="M3.8 5.8 H14.5 L12 12 H1.2 Z" fill="#d0d0d0"/></svg>
<div style="left:1639px;top:120px;width:0;height:0;border-left:4.5px solid transparent;border-right:4.5px solid transparent;border-top:8px solid #606060"></div>
<span class="t" style="left:1669px;top:116px;color:#d0d0d0;font-size:12px;font-weight:bold;">Assets</span>
<svg style="position:absolute;left:1665px;top:132px;" width="15" height="13" viewBox="0 0 15 13"><path d="M1 1.5 H5.5 L7 3.2 H14 V12 H1 Z" fill="#d0d0d0"/></svg>
<div style="left:1653px;top:134px;width:0;height:0;border-top:4.5px solid transparent;border-bottom:4.5px solid transparent;border-left:8px solid #606060"></div>
<span class="t" style="left:1683px;top:132px;color:#d0d0d0;font-size:12px;font-weight:normal;">HANA_Tool</span>
<svg style="position:absolute;left:1665px;top:148px;" width="15" height="13" viewBox="0 0 15 13"><path d="M1 1.5 H5.5 L7 3 H13 V5 H3.5 L1 11.5 Z" fill="#d0d0d0"/><path d="M3.8 5.8 H14.5 L12 12 H1.2 Z" fill="#d0d0d0"/></svg>
<div style="left:1653px;top:152px;width:0;height:0;border-left:4.5px solid transparent;border-right:4.5px solid transparent;border-top:8px solid #606060"></div>
<span class="t" style="left:1683px;top:148px;color:#d0d0d0;font-size:12px;font-weight:normal;">Models</span>
<svg style="position:absolute;left:1679px;top:164px;" width="15" height="13" viewBox="0 0 15 13"><path d="M1 1.5 H5.5 L7 3.2 H14 V12 H1 Z" fill="#d0d0d0"/></svg>
<div style="left:1667px;top:166px;width:0;height:0;border-top:4.5px solid transparent;border-bottom:4.5px solid transparent;border-left:8px solid #606060"></div>
<span class="t" style="left:1697px;top:164px;color:#d0d0d0;font-size:12px;font-weight:normal;">TestMan.Avatar</span>
<svg style="position:absolute;left:1679px;top:180px;" width="15" height="13" viewBox="0 0 15 13"><path d="M1 1.5 H5.5 L7 3.2 H14 V12 H1 Z" fill="#d0d0d0"/></svg>
<div style="left:1667px;top:182px;width:0;height:0;border-top:4.5px solid transparent;border-bottom:4.5px solid transparent;border-left:8px solid #606060"></div>
<span class="t" style="left:1697px;top:180px;color:#d0d0d0;font-size:12px;font-weight:normal;">TestMan.AvatarDescription</span>
<svg style="position:absolute;left:1679px;top:196px;" width="15" height="13" viewBox="0 0 15 13"><path d="M1 1.5 H5.5 L7 3.2 H14 V12 H1 Z" fill="#d0d0d0"/></svg>
<div style="left:1667px;top:198px;width:0;height:0;border-top:4.5px solid transparent;border-bottom:4.5px solid transparent;border-left:8px solid #606060"></div>
<span class="t" style="left:1697px;top:196px;color:#d0d0d0;font-size:12px;font-weight:normal;">TestMan.BlendShapes</span>
<svg style="position:absolute;left:1679px;top:212px;" width="15" height="13" viewBox="0 0 15 13"><path d="M1 1.5 H5.5 L7 3.2 H14 V12 H1 Z" fill="#d0d0d0"/></svg>
<div style="left:1667px;top:214px;width:0;height:0;border-top:4.5px solid transparent;border-bottom:4.5px solid transparent;border-left:8px solid #606060"></div>
<span class="t" style="left:1697px;top:212px;color:#d0d0d0;font-size:12px;font-weight:normal;">TestMan.Materials</span>
<svg style="position:absolute;left:1679px;top:228px;" width="15" height="13" viewBox="0 0 15 13"><path d="M1 1.5 H5.5 L7 3.2 H14 V12 H1 Z" fill="#d0d0d0"/></svg>
<div style="left:1667px;top:230px;width:0;height:0;border-top:4.5px solid transparent;border-bottom:4.5px solid transparent;border-left:8px solid #606060"></div>
<span class="t" style="left:1697px;top:228px;color:#d0d0d0;font-size:12px;font-weight:normal;">TestMan.Meshes</span>
<svg style="position:absolute;left:1679px;top:244px;" width="15" height="13" viewBox="0 0 15 13"><path d="M1 1.5 H5.5 L7 3.2 H14 V12 H1 Z" fill="#d0d0d0"/></svg>
<div style="left:1667px;top:246px;width:0;height:0;border-top:4.5px solid transparent;border-bottom:4.5px solid transparent;border-left:8px solid #606060"></div>
<span class="t" style="left:1697px;top:244px;color:#d0d0d0;font-size:12px;font-weight:normal;">TestMan.MetaObject</span>
<svg style="position:absolute;left:1679px;top:260px;" width="15" height="13" viewBox="0 0 15 13"><path d="M1 1.5 H5.5 L7 3.2 H14 V12 H1 Z" fill="#d0d0d0"/></svg>
<div style="left:1667px;top:262px;width:0;height:0;border-top:4.5px solid transparent;border-bottom:4.5px solid transparent;border-left:8px solid #606060"></div>
<span class="t" style="left:1697px;top:260px;color:#d0d0d0;font-size:12px;font-weight:normal;">TestMan.Textures</span>
<svg style="position:absolute;left:1678px;top:275px;" width="15" height="15" viewBox="0 0 15 15"><path d="M7.5 0.8 L14 4 V11 L7.5 14.2 L1 11 V4 Z" fill="#64c5f0"/><path d="M1 4 L7.5 7.2 L14 4 M7.5 7.2 V14.2" fill="none" stroke="#2d6f92" stroke-width="1.1"/></svg>
<span class="t" style="left:1697px;top:276px;color:#d0d0d0;font-size:12px;font-weight:normal;">TestMan</span>
<svg style="position:absolute;left:1665px;top:292px;" width="15" height="13" viewBox="0 0 15 13"><path d="M1 1.5 H5.5 L7 3.2 H14 V12 H1 Z" fill="#d0d0d0"/></svg>
<div style="left:1653px;top:294px;width:0;height:0;border-top:4.5px solid transparent;border-bottom:4.5px solid transparent;border-left:8px solid #606060"></div>
<span class="t" style="left:1683px;top:292px;color:#d0d0d0;font-size:12px;font-weight:normal;">Scenes</span>
<svg style="position:absolute;left:1665px;top:308px;" width="15" height="13" viewBox="0 0 15 13"><path d="M1 1.5 H5.5 L7 3.2 H14 V12 H1 Z" fill="#d0d0d0"/></svg>
<div style="left:1653px;top:310px;width:0;height:0;border-top:4.5px solid transparent;border-bottom:4.5px solid transparent;border-left:8px solid #606060"></div>
<span class="t" style="left:1683px;top:308px;color:#d0d0d0;font-size:12px;font-weight:normal;">UniGLTF</span>
<svg style="position:absolute;left:1665px;top:324px;" width="15" height="13" viewBox="0 0 15 13"><path d="M1 1.5 H5.5 L7 3.2 H14 V12 H1 Z" fill="#d0d0d0"/></svg>
<div style="left:1653px;top:326px;width:0;height:0;border-top:4.5px solid transparent;border-bottom:4.5px solid transparent;border-left:8px solid #606060"></div>
<span class="t" style="left:1683px;top:324px;color:#d0d0d0;font-size:12px;font-weight:normal;">VRM</span>
<svg style="position:absolute;left:1651px;top:340px;" width="15" height="13" viewBox="0 0 15 13"><path d="M1 1.5 H5.5 L7 3.2 H14 V12 H1 Z" fill="#d0d0d0"/></svg>
<div style="left:1639px;top:342px;width:0;height:0;border-top:4.5px solid transparent;border-bottom:4.5px solid transparent;border-left:8px solid #606060"></div>
<span class="t" style="left:1669px;top:340px;color:#d0d0d0;font-size:12px;font-weight:bold;">Packages</span>
<div style="left:0px;top:1016px;width:1916px;height:24px;background:#191919;"></div>
<div style="left:46px;top:1038px;width:287px;height:2px;background:#ececec;"></div>
<div style="left:776px;top:1037px;width:48px;height:3px;background:#3a3a3a;"></div>
<div style="left:1672px;top:984px;width:237px;height:50px;background:#ffffff;border-radius:4px"></div>
<span class="t" style="left:1692px;top:1002px;color:#333333;font-size:14px;font-weight:normal;-webkit-text-stroke:0">00:01 /</span>
<span class="t" style="left:1740px;top:1002px;color:#aaaaaa;font-size:14px;font-weight:normal;-webkit-text-stroke:0">120:00</span>
<div style="left:1809px;top:994px;width:80px;height:30px;background:#f04b2e;border-radius:3px"></div>
<svg style="position:absolute;left:1821px;top:1002px;" width="56" height="14" viewBox="0 0 56 14"><g fill="none" stroke="#fff" stroke-width="1.35" stroke-linecap="square"><path d="M4 1 L1.5 5.2 H4.8 L1.2 9 L5.2 8.4 M1 12.8 L5.2 11"/><path d="M6.5 3.2 H13.2 M9.8 0.8 V6 M7.2 6 H12.6"/><rect x="7.3" y="8.2" width="5.2" height="4.6"/><g transform="translate(14,0)"><path d="M1.2 3.2 H12.8 M7 0.6 V13.6 M7 8.6 L1.5 13 M7 8.6 L12.5 13"/><rect x="3" y="5" width="8" height="3.6"/></g><g transform="translate(28,0)"><path d="M2.5 1.2 H11.2 V6.6 M3 3.9 H11 M1.5 6.6 H12.8 M7 6.6 V13 L5.5 12.2 M1.8 8.5 L5 10.2 M1.5 13 L5.5 10.5 M12 8.2 L8.8 10 M8.6 10 L12.8 13"/></g><g transform="translate(42,0)"><path d="M2.4 1 L1.4 3.6 M1 4 H9 M5 0.8 V13.6 M0.6 6.8 H9.4 M2 8.8 V12.6 M2 8.8 H8 V12 L7 11.6 M10.6 2 V10 M13 0.6 V13 L11.6 12.6"/></g></g></svg>
</body></html>
